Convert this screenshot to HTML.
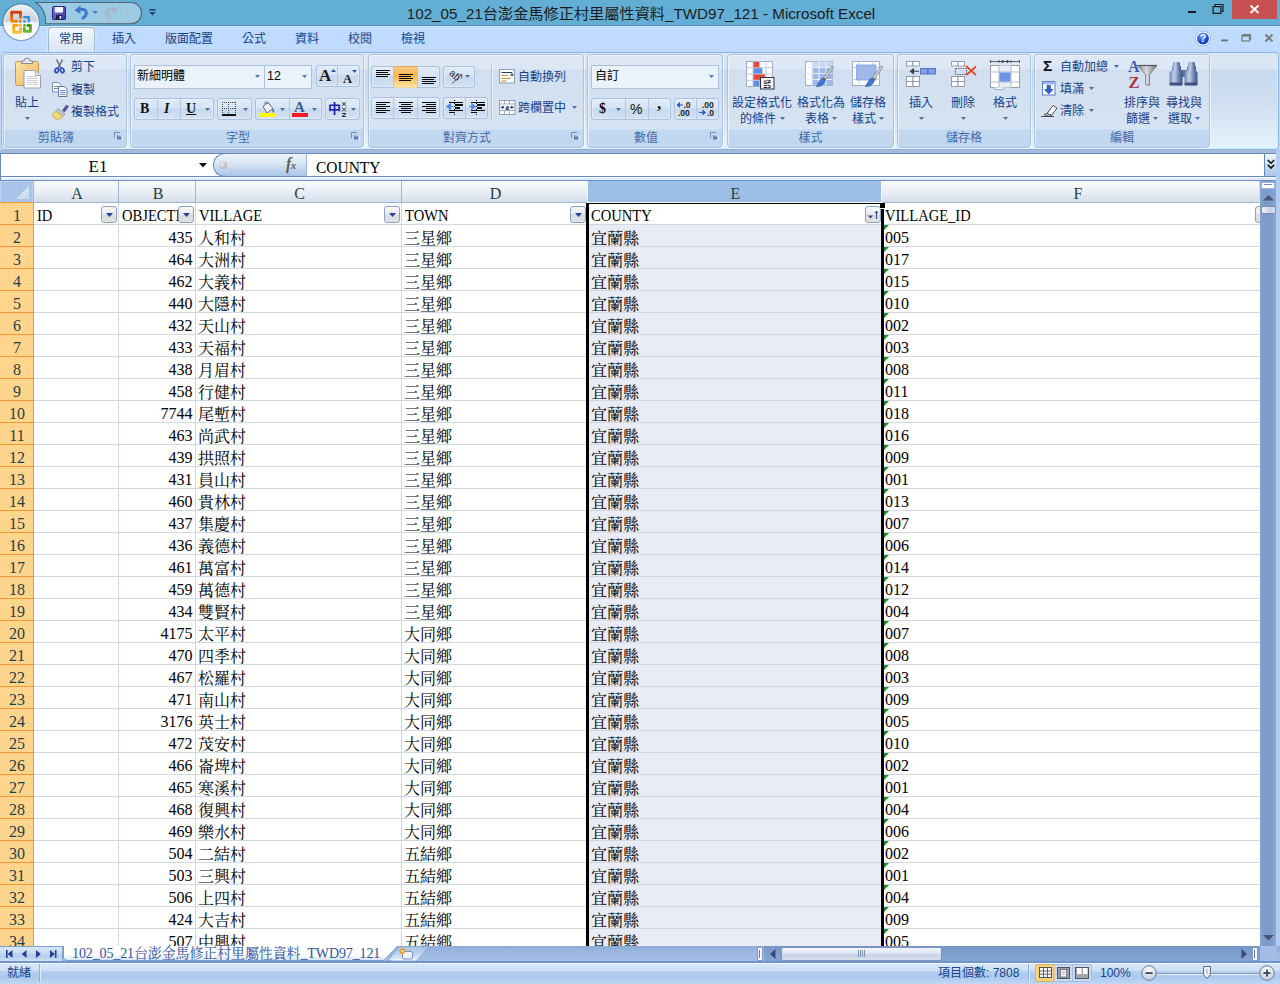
<!DOCTYPE html>
<html lang="zh-Hant"><head><meta charset="utf-8"><title>Microsoft Excel</title>
<style>
*{box-sizing:border-box;margin:0;padding:0}
html,body{width:1280px;height:984px;overflow:hidden}
body{position:relative;background:#bfdbff;font-family:"Liberation Sans","Noto Sans CJK TC",sans-serif;font-size:12px;color:#15428b}
.a{position:absolute}
.ui{font-family:"Liberation Sans","Noto Sans CJK TC",sans-serif}
.cell{font-family:"Liberation Serif","Noto Serif CJK SC",serif;font-size:16px;color:#000;white-space:nowrap;line-height:22px;height:22px;overflow:hidden}
.t{position:absolute;white-space:nowrap;line-height:14px;font-size:12px;color:#15428b}
svg{position:absolute;overflow:visible}
/* title */
#title{left:0;top:0;width:1280px;height:26px;background:#63aed5;border-bottom:1px solid #4f97ba}
#tabs{left:0;top:26px;width:1280px;height:27px;background:#bfdbff;border-top:1px solid #cbe2ff}
/* ribbon */
#ribbon{left:1px;top:52px;width:1278px;height:98px;border:1px solid #8db2e3;border-radius:4px;background:linear-gradient(#dbe6f4 0,#dae5f3 16px,#c8d9ee 17px,#cfdff1 50px,#e1f0fb 90px,#e6f5fd 97px);box-shadow:inset 0 -1px 0 #c4f0ff,inset -1px 0 0 #d4f0ff}
.grp{position:absolute;top:54px;height:94px;border:1px solid #a9c3e3;border-radius:4px;background:linear-gradient(#dfe9f6 0,#dce7f5 14px,#d1dff0 15px,#d6e3f3 74px,#c2d8f0 75px,#c1d7ef 93px);box-shadow:inset 1px 1px 0 rgba(255,255,255,.55),1px 1px 0 rgba(255,255,255,.55)}
.glab{position:absolute;left:0;right:0;top:76px;height:14px;line-height:14px;text-align:center;color:#3e6aaa;font-size:12px}
.launch{position:absolute;right:4px;top:77px;width:8px;height:8px}
</style></head><body>
<div id="title" class="a"></div>
<div id="tabs" class="a"></div>
<svg class="a" style="left:0;top:0" width="170" height="52" viewBox="0 0 170 52">
<defs>
<radialGradient id="ob" cx="50%" cy="35%" r="70%"><stop offset="0" stop-color="#ffffff"/><stop offset=".55" stop-color="#e9edf3"/><stop offset="1" stop-color="#b9c4d4"/></radialGradient>
<linearGradient id="ob2" x1="0" y1="0" x2="0" y2="1"><stop offset="0" stop-color="#eef1f6"/><stop offset=".5" stop-color="#c6cedb"/><stop offset="1" stop-color="#d8dee8"/></linearGradient>
<linearGradient id="ob3" x1="0" y1="0" x2="0" y2="1"><stop offset="0" stop-color="#e9edf4"/><stop offset=".5" stop-color="#fbfcfe"/><stop offset="1" stop-color="#ffffff"/></linearGradient>
<linearGradient id="lg1" x1="0" y1="0" x2="0" y2="1"><stop offset="0" stop-color="#d23f12"/><stop offset="1" stop-color="#f58a14"/></linearGradient>
<linearGradient id="lg3" x1="0" y1="0" x2="0" y2="1"><stop offset="0" stop-color="#f6a012"/><stop offset="1" stop-color="#fbc02a"/></linearGradient>
<linearGradient id="lg4" x1="0" y1="0" x2="0" y2="1"><stop offset="0" stop-color="#4c9a22"/><stop offset="1" stop-color="#6ab832"/></linearGradient>
<linearGradient id="sv" x1="0" y1="0" x2="1" y2="1"><stop offset="0" stop-color="#8a7be0"/><stop offset="1" stop-color="#3a2f9a"/></linearGradient>
</defs>
<path d="M36 2.5 H131 A10.6 10.6 0 0 1 131 23.7 H45.6 A23.5 23.5 0 0 0 36 2.5 Z" fill="#9ccae2" stroke="#4f6474" stroke-width="1.1"/>
<circle cx="21.200" cy="22.200" r="18.300" fill="none" stroke="#56708a" stroke-opacity=".55" stroke-width="1.200"/>
<circle cx="21.200" cy="22.200" r="17.500" fill="url(#ob2)"/>
<path d="M3.700 22.200 A17.500 17.500 0 0 0 38.700 22.200 Q21.200 19.500 3.700 22.200 Z" fill="url(#ob3)"/>
<circle cx="21.200" cy="22.200" r="17" fill="none" stroke="#ffffff" stroke-opacity=".7" stroke-width="1"/>
<!-- office logo -->
<g fill="none" stroke-linejoin="round" stroke-linecap="round">
<path d="M17 21.300 H11.600 V12.300 H20.500 V17.500" stroke="url(#lg1)" stroke-width="2.900"/>
<path d="M24.200 17.200 H28.800 V21.500" stroke="#2f8edb" stroke-width="2.300"/>
<path d="M17.300 25.400 H13.700 V32.300 H20.500 V28.800" stroke="url(#lg3)" stroke-width="2.900"/>
<path d="M24.300 28.800 V31.400 H30.400 V25.500 H27.800" stroke="url(#lg4)" stroke-width="2.900"/>
</g>
<circle cx="20.300" cy="21.500" r="1.350" fill="#e8641a"/><circle cx="24.500" cy="21.500" r="1.350" fill="#2f8edb"/>
<circle cx="20.300" cy="25.400" r="1.350" fill="#f7b21e"/><circle cx="24.500" cy="25.400" r="1.350" fill="#5aa52a"/>
<!-- save -->
<rect x="52.500" y="6.500" width="13" height="13" rx="1" fill="url(#sv)" stroke="#2b2384"/>
<rect x="55" y="7" width="8" height="5.500" fill="#f4f6ff"/>
<rect x="56" y="15" width="6" height="4.500" fill="#1d1b4a"/><rect x="59.500" y="16" width="1.800" height="2.800" fill="#e8e8f8"/>
<!-- undo -->
<path d="M82 18.800 C88 15 87.500 9.300 81.500 9.300 L79.500 9.300" fill="none" stroke="#3a78d0" stroke-width="3"/>
<path d="M74.500 10.200 L80.500 5.500 L80.500 14 Z" fill="#3a78d0"/>
<path d="M92.500 11 h5.500 l-2.750 3 z" fill="#4a76b8"/>
<!-- redo -->
<path d="M111 18.800 C105 15 105.500 9.300 111.500 9.300 L113.500 9.300" fill="none" stroke="#a6b8cb" stroke-width="3"/>
<path d="M118.500 10.200 L112.500 5.500 L112.500 14 Z" fill="#a6b8cb"/>
<path d="M124.500 11 h5.500 l-2.750 3 z" fill="#a9bccb"/>
<!-- customize -->
<rect x="149.500" y="9" width="6" height="1.600" fill="#1f3f7a"/>
<path d="M149.300 12 h6.400 l-3.200 3.600 z" fill="#1f3f7a"/>
</svg>
<div class="a" style="left:0;top:4px;width:1282px;text-align:center;font-size:15.200px;line-height:20px;color:#1c1c1c;white-space:nowrap">102_05_21台澎金馬修正村里屬性資料_TWD97_121 - Microsoft Excel</div>
<svg class="a" style="left:1180px;top:0" width="100" height="26" viewBox="0 0 100 26">
<rect x="52" y="0" width="45" height="19" fill="#c75050"/>
<path d="M70.500 5.500 l8 7.500 M78.500 5.500 l-8 7.500" stroke="#fff" stroke-width="1.900" fill="none"/>
<rect x="8" y="11" width="8" height="2" fill="#1a1a1a"/>
<path d="M35 6 v-1.500 h8 v7 h-1.500" fill="none" stroke="#1a1a1a" stroke-width="1.200"/>
<rect x="33.100" y="6.600" width="7.800" height="6.800" fill="none" stroke="#1a1a1a" stroke-width="1.200"/>
</svg>
<div class="a" style="left:48px;top:27px;width:47px;height:26px;border:1px solid #9bbbe3;border-bottom:none;border-radius:4px 4px 0 0;background:linear-gradient(#f3f8fe,#e2ecf8 60%,#dbe6f4);box-shadow:0 0 3px rgba(255,255,255,.9)"></div>
<div class="t" style="left:49px;top:32px;width:44px;text-align:center">常用</div>
<div class="t" style="left:102px;top:32px;width:44px;text-align:center">插入</div>
<div class="t" style="left:155px;top:32px;width:68px;text-align:center">版面配置</div>
<div class="t" style="left:232px;top:32px;width:44px;text-align:center">公式</div>
<div class="t" style="left:285px;top:32px;width:44px;text-align:center">資料</div>
<div class="t" style="left:338px;top:32px;width:44px;text-align:center">校閱</div>
<div class="t" style="left:391px;top:32px;width:44px;text-align:center">檢視</div>
<svg class="a" style="left:1190px;top:26px" width="90" height="26" viewBox="0 0 90 26">
<defs><radialGradient id="hp" cx="40%" cy="30%" r="75%"><stop offset="0" stop-color="#6fa0ff"/><stop offset=".6" stop-color="#1f4fd0"/><stop offset="1" stop-color="#0a2a9a"/></radialGradient></defs>
<circle cx="13" cy="12.500" r="6.600" fill="url(#hp)" stroke="#ffffff" stroke-width="1.300"/>
<circle cx="13" cy="12.500" r="7.500" fill="none" stroke="#7f9fd0" stroke-width=".6"/>
<text x="13" y="16.300" font-family="Liberation Sans,sans-serif" font-size="10.500" font-weight="bold" fill="#fff" text-anchor="middle">?</text>
<rect x="31" y="13.500" width="7" height="1.800" fill="#6f6f6f"/>
<path d="M53 10 v-1.500 h7.500 v5 h-1.500" fill="none" stroke="#7a7a7a" stroke-width="1.100"/>
<rect x="52" y="9.500" width="7.500" height="5.500" fill="none" stroke="#7a7a7a" stroke-width="1.200"/>
<rect x="52" y="9.200" width="7.500" height="1.300" fill="#7a7a7a"/>
<path d="M75.500 8.500 l7 7 M82.500 8.500 l-7 7" stroke="#7a7a7a" stroke-width="1.900" fill="none"/>
</svg>
<div id="ribbon" class="a"></div>
<div class="grp" style="left:3px;width:124px"><div class="glab" style="right:18px">剪貼簿</div><svg class="launch" viewBox="0 0 8 8" width="8" height="8"><path d="M.5 6 V.5 H6" fill="none" stroke="#6e8fc0" stroke-width="1"/><rect x="3" y="3" width="4.500" height="4.500" fill="#5f80b5"/><path d="M3 3 h4.500 v4.500" fill="none" stroke="#fff" stroke-width=".8" transform="translate(.8 .8)"/></svg></div>
<div class="grp" style="left:130px;width:234px"><div class="glab" style="right:18px">字型</div><svg class="launch" viewBox="0 0 8 8" width="8" height="8"><path d="M.5 6 V.5 H6" fill="none" stroke="#6e8fc0" stroke-width="1"/><rect x="3" y="3" width="4.500" height="4.500" fill="#5f80b5"/><path d="M3 3 h4.500 v4.500" fill="none" stroke="#fff" stroke-width=".8" transform="translate(.8 .8)"/></svg></div>
<div class="grp" style="left:368px;width:216px"><div class="glab" style="right:18px">對齊方式</div><svg class="launch" viewBox="0 0 8 8" width="8" height="8"><path d="M.5 6 V.5 H6" fill="none" stroke="#6e8fc0" stroke-width="1"/><rect x="3" y="3" width="4.500" height="4.500" fill="#5f80b5"/><path d="M3 3 h4.500 v4.500" fill="none" stroke="#fff" stroke-width=".8" transform="translate(.8 .8)"/></svg></div>
<div class="grp" style="left:587px;width:136px"><div class="glab" style="right:18px">數值</div><svg class="launch" viewBox="0 0 8 8" width="8" height="8"><path d="M.5 6 V.5 H6" fill="none" stroke="#6e8fc0" stroke-width="1"/><rect x="3" y="3" width="4.500" height="4.500" fill="#5f80b5"/><path d="M3 3 h4.500 v4.500" fill="none" stroke="#fff" stroke-width=".8" transform="translate(.8 .8)"/></svg></div>
<div class="grp" style="left:727px;width:167px"><div class="glab" style="right:0px">樣式</div></div>
<div class="grp" style="left:897px;width:134px"><div class="glab" style="right:0px">儲存格</div></div>
<div class="grp" style="left:1034px;width:176px"><div class="glab" style="right:0px">編輯</div></div>
<svg class="a" style="left:14px;top:58px" width="30" height="34" viewBox="0 0 30 34">
<defs><linearGradient id="cb" x1="0" y1="0" x2="1" y2="1"><stop offset="0" stop-color="#fbe3a6"/><stop offset="1" stop-color="#eab65c"/></linearGradient></defs>
<rect x="1.500" y="3.500" width="23" height="24" rx="2" fill="url(#cb)" stroke="#c39845"/>
<path d="M7.500 5.500 h11 v-2.500 h-2.500 a3 3 0 0 0 -6 0 h-2.500 z" fill="#e4e6ea" stroke="#7a8088" stroke-width=".9"/>
<path d="M10 12.500 h11.500 l5 5 v12.500 h-16.500 z" fill="#fdfdfe" stroke="#9099a8" stroke-width=".9"/>
<path d="M21.500 12.500 v5 h5" fill="#e4e8ee" stroke="#9099a8" stroke-width=".8"/>
<path d="M12.500 18.500 h10 M12.500 20.500 h11.500 M12.500 22.500 h11.500 M12.500 24.500 h11.500 M12.500 26.500 h11.500" stroke="#c4cad6" stroke-width=".9"/>
</svg>
<div class="t" style="left:-33px;top:96px;width:120px;text-align:center;">貼上</div>
<svg class="a" style="left:24.5px;top:117px" width="5" height="3" viewBox="0 0 5 3"><path d="M0 0 h5 l-2.5 3 z" fill="#4d6f9f"/></svg>
<svg class="a" style="left:54px;top:59px" width="11" height="15" viewBox="0 0 11 15">
<path d="M2.500 .5 L6.800 9 M8.500 .5 L4.200 9" stroke="#6a7482" stroke-width="1.600" fill="none"/>
<ellipse cx="2.800" cy="11.300" rx="1.700" ry="2.300" fill="none" stroke="#2a4fbf" stroke-width="1.700" transform="rotate(25 2.800 11.300)"/>
<ellipse cx="8.200" cy="11.300" rx="1.700" ry="2.300" fill="none" stroke="#2a4fbf" stroke-width="1.700" transform="rotate(-25 8.200 11.300)"/>
</svg>
<div class="t" style="left:71px;top:60px;">剪下</div>
<svg class="a" style="left:52px;top:82px" width="16" height="15" viewBox="0 0 16 15">
<path d="M.5 .5 h6 l2.500 2.500 v7 h-8.500 z" fill="#fff" stroke="#6d86b4" stroke-width=".9"/>
<path d="M2 4.500 h5 M2 6.500 h5" stroke="#5a7fc0" stroke-width=".9"/>
<path d="M6.500 4.500 h6 l2.500 2.500 v7.500 h-8.500 z" fill="#fff" stroke="#52699b" stroke-width=".9"/>
<path d="M8 8.500 h5.500 M8 10.500 h5.500 M8 12.500 h5.500" stroke="#5a7fc0" stroke-width=".9"/>
</svg>
<div class="t" style="left:71px;top:83px;">複製</div>
<svg class="a" style="left:52px;top:104px" width="17" height="16" viewBox="0 0 17 16">
<path d="M10.500 6.500 L14.500 1 L16.500 2.500 L12.500 8 z" fill="#5a55b0" stroke="#3a3780" stroke-width=".6"/>
<path d="M6 4.500 L13 10 L11 12.500 L4 7 z" fill="#c3c7d0" stroke="#7a8290" stroke-width=".6"/>
<path d="M4 7 L11 12.500 L6.500 15.500 C3.500 16 0 12.500 .5 10 z" fill="#f2d87c" stroke="#c2a040" stroke-width=".7"/>
</svg>
<div class="t" style="left:71px;top:105px;">複製格式</div>
<div class="a" style="left:134px;top:65px;width:131px;height:24px;background:#eaf2fb;border:1px solid #abc1de;"></div>
<div class="a" style="left:137px;top:69px;font-size:12px;line-height:14px;color:#000;white-space:nowrap">新細明體</div>
<svg class="a" style="left:255px;top:75px" width="5" height="3" viewBox="0 0 5 3"><path d="M0 0 h5 l-2.5 3 z" fill="#5179b5"/></svg>
<div class="a" style="left:264px;top:65px;width:48px;height:24px;background:#eaf2fb;border:1px solid #abc1de;"></div>
<div class="a" style="left:267px;top:69px;font-size:12.500px;line-height:14px;color:#000;white-space:nowrap">12</div>
<svg class="a" style="left:302px;top:75px" width="5" height="3" viewBox="0 0 5 3"><path d="M0 0 h5 l-2.5 3 z" fill="#5179b5"/></svg>
<div class="a" style="left:316px;top:65px;width:44px;height:22px;background:linear-gradient(#e1ebf8 0,#d6e4f5 45%,#c7d9ef 50%,#d3e2f4 100%);border:1px solid #a9c0df;border-radius:3px;box-shadow:inset 0 0 0 1px rgba(255,255,255,.35);"></div>
<div class="a" style="left:337px;top:66px;width:1px;height:20px;background:#b3c8e4"></div>
<div class="a" style="left:319px;top:66px;font:bold 17px/20px 'Liberation Serif',serif;color:#1a1a1a">A</div>
<div class="a" style="left:343px;top:70px;font:bold 12.500px/18px 'Liberation Serif',serif;color:#1a1a1a">A</div>
<svg class="a" style="left:331px;top:69px" width="5" height="3" viewBox="0 0 5 3"><path d="M0 3 h5 l-2.500 -3 z" fill="#2f55a8"/></svg>
<svg class="a" style="left:352px;top:70px" width="5" height="3" viewBox="0 0 5 3"><path d="M0 0 h5 l-2.500 3 z" fill="#2f55a8"/></svg>
<div class="a" style="left:134px;top:98px;width:80px;height:22px;background:linear-gradient(#e1ebf8 0,#d6e4f5 45%,#c7d9ef 50%,#d3e2f4 100%);border:1px solid #a9c0df;border-radius:3px;box-shadow:inset 0 0 0 1px rgba(255,255,255,.35);"></div>
<div class="a" style="left:157px;top:99px;width:1px;height:20px;background:#b3c8e4"></div>
<div class="a" style="left:180px;top:99px;width:1px;height:20px;background:#b3c8e4"></div>
<div class="a" style="left:140px;top:99px;font:bold 14px/20px 'Liberation Serif',serif;color:#111">B</div>
<div class="a" style="left:164px;top:99px;font:italic bold 14px/20px 'Liberation Serif',serif;color:#111">I</div>
<div class="a" style="left:186px;top:99px;font:bold 14px/20px 'Liberation Serif',serif;color:#111;text-decoration:underline">U</div>
<svg class="a" style="left:204.5px;top:107.5px" width="5" height="3" viewBox="0 0 5 3"><path d="M0 0 h5 l-2.5 3 z" fill="#4d6f9f"/></svg>
<div class="a" style="left:217px;top:98px;width:35px;height:22px;background:linear-gradient(#e1ebf8 0,#d6e4f5 45%,#c7d9ef 50%,#d3e2f4 100%);border:1px solid #a9c0df;border-radius:3px;box-shadow:inset 0 0 0 1px rgba(255,255,255,.35);"></div>
<svg class="a" style="left:222px;top:102px" width="14" height="14" viewBox="0 0 14 14"><g shape-rendering="crispEdges" fill="#4a4a4a"><rect x="0" y="0" width="1" height="1"/><rect x="2" y="0" width="1" height="1"/><rect x="4" y="0" width="1" height="1"/><rect x="6" y="0" width="1" height="1"/><rect x="8" y="0" width="1" height="1"/><rect x="10" y="0" width="1" height="1"/><rect x="12" y="0" width="1" height="1"/><rect x="0" y="6" width="1" height="1"/><rect x="2" y="6" width="1" height="1"/><rect x="4" y="6" width="1" height="1"/><rect x="6" y="6" width="1" height="1"/><rect x="8" y="6" width="1" height="1"/><rect x="10" y="6" width="1" height="1"/><rect x="12" y="6" width="1" height="1"/><rect x="0" y="0" width="1" height="1"/><rect x="0" y="2" width="1" height="1"/><rect x="0" y="4" width="1" height="1"/><rect x="0" y="6" width="1" height="1"/><rect x="0" y="8" width="1" height="1"/><rect x="0" y="10" width="1" height="1"/><rect x="6" y="0" width="1" height="1"/><rect x="6" y="2" width="1" height="1"/><rect x="6" y="4" width="1" height="1"/><rect x="6" y="6" width="1" height="1"/><rect x="6" y="8" width="1" height="1"/><rect x="6" y="10" width="1" height="1"/><rect x="13" y="0" width="1" height="1"/><rect x="13" y="2" width="1" height="1"/><rect x="13" y="4" width="1" height="1"/><rect x="13" y="6" width="1" height="1"/><rect x="13" y="8" width="1" height="1"/><rect x="13" y="10" width="1" height="1"/></g><rect x="0" y="12" width="14" height="2" fill="#111" shape-rendering="crispEdges"/></svg>
<svg class="a" style="left:242.5px;top:107.5px" width="5" height="3" viewBox="0 0 5 3"><path d="M0 0 h5 l-2.5 3 z" fill="#4d6f9f"/></svg>
<div class="a" style="left:255px;top:98px;width:67px;height:22px;background:linear-gradient(#e1ebf8 0,#d6e4f5 45%,#c7d9ef 50%,#d3e2f4 100%);border:1px solid #a9c0df;border-radius:3px;box-shadow:inset 0 0 0 1px rgba(255,255,255,.35);"></div>
<div class="a" style="left:289px;top:99px;width:1px;height:20px;background:#b3c8e4"></div>
<svg class="a" style="left:259px;top:101px" width="16" height="17" viewBox="0 0 16 17">
<path d="M4 5.500 L9 1.500 L14 7.500 L8 12 z" fill="#f4f6fa" stroke="#5d6a7d" stroke-width="1"/>
<path d="M6 3.500 C5 0 9 0 8.500 3" fill="none" stroke="#5d6a7d" stroke-width=".9"/>
<path d="M13.500 7.500 C15.500 9 15.500 11 14.500 12 C13.500 11 13 9 13.500 7.500 z" fill="#2b64c8"/>
<rect x="0" y="12" width="16" height="4" fill="#ffff00"/>
</svg>
<svg class="a" style="left:279.5px;top:107.5px" width="5" height="3" viewBox="0 0 5 3"><path d="M0 0 h5 l-2.5 3 z" fill="#4d6f9f"/></svg>
<div class="a" style="left:294px;top:98px;font:bold 15px/18px 'Liberation Serif',serif;color:#3a5f9f">A</div>
<div class="a" style="left:292px;top:113px;width:16px;height:4px;background:#ee1c24"></div>
<svg class="a" style="left:312px;top:107.5px" width="5" height="3" viewBox="0 0 5 3"><path d="M0 0 h5 l-2.5 3 z" fill="#4d6f9f"/></svg>
<div class="a" style="left:325px;top:98px;width:35px;height:22px;background:linear-gradient(#e1ebf8 0,#d6e4f5 45%,#c7d9ef 50%,#d3e2f4 100%);border:1px solid #a9c0df;border-radius:3px;box-shadow:inset 0 0 0 1px rgba(255,255,255,.35);"></div>
<div class="a" style="left:328px;top:101px;font-size:13px;line-height:15px;color:#1c1cb0;font-weight:bold">中</div>
<svg class="a" style="left:341px;top:101px" width="6" height="16" viewBox="0 0 6 16"><path d="M1 1 l4 4 M5 1 l-4 4 M1 6.500 l4 4 M5 6.500 l-4 4 M1 12.500 h4 l-4 3 h4" fill="none" stroke="#222" stroke-width=".9"/></svg>
<svg class="a" style="left:350.5px;top:107.5px" width="5" height="3" viewBox="0 0 5 3"><path d="M0 0 h5 l-2.5 3 z" fill="#4d6f9f"/></svg>
<div class="a" style="left:371px;top:66px;width:69px;height:22px;background:linear-gradient(#e1ebf8 0,#d6e4f5 45%,#c7d9ef 50%,#d3e2f4 100%);border:1px solid #a9c0df;border-radius:3px;box-shadow:inset 0 0 0 1px rgba(255,255,255,.35);"></div>
<div class="a" style="left:394px;top:66px;width:23px;height:22px;background:linear-gradient(#f5c98c 0,#fbb550 40%,#fcbc58 55%,#fee7a0 100%);border-top:1px solid #e3a95b;border-bottom:1px solid #f3d9a0"></div>
<div class="a" style="left:393px;top:67px;width:1px;height:20px;background:#b3c8e4"></div>
<div class="a" style="left:417px;top:67px;width:1px;height:20px;background:#b3c8e4"></div>
<svg class="a" shape-rendering="crispEdges" style="left:376px;top:70px" width="14" height="8" viewBox="0 0 14 8"><rect x="0" y="0" width="14" height="1" fill="#0a0a0a"/><rect x="0" y="2" width="12" height="1" fill="#0a0a0a"/><rect x="0" y="4" width="14" height="1" fill="#0a0a0a"/><rect x="0" y="6" width="12" height="1" fill="#0a0a0a"/></svg>
<svg class="a" shape-rendering="crispEdges" style="left:399px;top:74px" width="14" height="8" viewBox="0 0 14 8"><rect x="0" y="0" width="14" height="1" fill="#0a0a0a"/><rect x="0" y="2" width="12" height="1" fill="#0a0a0a"/><rect x="0" y="4" width="14" height="1" fill="#0a0a0a"/><rect x="0" y="6" width="12" height="1" fill="#0a0a0a"/></svg>
<svg class="a" shape-rendering="crispEdges" style="left:422px;top:77px" width="14" height="8" viewBox="0 0 14 8"><rect x="0" y="0" width="14" height="1" fill="#0a0a0a"/><rect x="0" y="2" width="12" height="1" fill="#0a0a0a"/><rect x="0" y="4" width="14" height="1" fill="#0a0a0a"/><rect x="0" y="6" width="12" height="1" fill="#0a0a0a"/></svg>
<div class="a" style="left:443px;top:66px;width:32px;height:22px;background:linear-gradient(#e1ebf8 0,#d6e4f5 45%,#c7d9ef 50%,#d3e2f4 100%);border:1px solid #a9c0df;border-radius:3px;box-shadow:inset 0 0 0 1px rgba(255,255,255,.35);"></div>
<svg class="a" style="left:446px;top:68px" width="18" height="18" viewBox="0 0 18 18"><text x="0" y="0" font-family="Liberation Sans,sans-serif" font-size="10" fill="#2a2a2a" transform="translate(2.500 6) rotate(42)">ab</text><path d="M6 15.500 L16 6.500 M16 6.500 l-3.800 .5 M16 6.500 l-.5 3.800" stroke="#6a4a48" stroke-width="1" fill="none"/></svg>
<svg class="a" style="left:465px;top:75px" width="5" height="3" viewBox="0 0 5 3"><path d="M0 0 h5 l-2.5 3 z" fill="#4d6f9f"/></svg>
<div class="a" style="left:371px;top:97px;width:69px;height:22px;background:linear-gradient(#e1ebf8 0,#d6e4f5 45%,#c7d9ef 50%,#d3e2f4 100%);border:1px solid #a9c0df;border-radius:3px;box-shadow:inset 0 0 0 1px rgba(255,255,255,.35);"></div>
<div class="a" style="left:393px;top:98px;width:1px;height:20px;background:#b3c8e4"></div>
<div class="a" style="left:417px;top:98px;width:1px;height:20px;background:#b3c8e4"></div>
<svg class="a" shape-rendering="crispEdges" style="left:376px;top:102px" width="14" height="12" viewBox="0 0 14 12"><rect x="0" y="0" width="14" height="1" fill="#0a0a0a"/><rect x="0" y="2" width="10" height="1" fill="#0a0a0a"/><rect x="0" y="4" width="14" height="1" fill="#0a0a0a"/><rect x="0" y="6" width="10" height="1" fill="#0a0a0a"/><rect x="0" y="8" width="14" height="1" fill="#0a0a0a"/><rect x="0" y="10" width="10" height="1" fill="#0a0a0a"/></svg>
<svg class="a" shape-rendering="crispEdges" style="left:399px;top:102px" width="14" height="12" viewBox="0 0 14 12"><rect x="0" y="0" width="14" height="1" fill="#0a0a0a"/><rect x="2" y="2" width="10" height="1" fill="#0a0a0a"/><rect x="0" y="4" width="14" height="1" fill="#0a0a0a"/><rect x="2" y="6" width="10" height="1" fill="#0a0a0a"/><rect x="0" y="8" width="14" height="1" fill="#0a0a0a"/><rect x="2" y="10" width="10" height="1" fill="#0a0a0a"/></svg>
<svg class="a" shape-rendering="crispEdges" style="left:422px;top:102px" width="14" height="12" viewBox="0 0 14 12"><rect x="0" y="0" width="14" height="1" fill="#0a0a0a"/><rect x="4" y="2" width="10" height="1" fill="#0a0a0a"/><rect x="0" y="4" width="14" height="1" fill="#0a0a0a"/><rect x="4" y="6" width="10" height="1" fill="#0a0a0a"/><rect x="0" y="8" width="14" height="1" fill="#0a0a0a"/><rect x="4" y="10" width="10" height="1" fill="#0a0a0a"/></svg>
<div class="a" style="left:443px;top:97px;width:45px;height:22px;background:linear-gradient(#e1ebf8 0,#d6e4f5 45%,#c7d9ef 50%,#d3e2f4 100%);border:1px solid #a9c0df;border-radius:3px;box-shadow:inset 0 0 0 1px rgba(255,255,255,.35);"></div>
<div class="a" style="left:465px;top:98px;width:1px;height:20px;background:#b3c8e4"></div>
<svg class="a" style="left:447px;top:100px" width="17" height="15" viewBox="0 0 17 15"><g shape-rendering="crispEdges" fill="#0a0a0a"><rect x="2" y="2" width="14" height="1"/><rect x="8" y="4" width="8" height="2"/><rect x="8" y="7" width="5" height="2"/><rect x="2" y="10" width="14" height="1"/><rect x="2" y="12" width="6" height="1"/><rect x="7" y="0" width="1" height="1"/><rect x="7" y="3" width="1" height="1"/><rect x="7" y="6" width="1" height="1"/><rect x="7" y="9" width="1" height="1"/><rect x="7" y="12" width="1" height="1"/><rect x="7" y="14" width="1" height="1"/></g><path d="M6 6.500 h-3.500 M0 6.500 l3.200 -2.600 v5.200 z" fill="#4a86e8" stroke="#4a86e8" stroke-width="1.200"/></svg>
<svg class="a" style="left:469px;top:100px" width="17" height="15" viewBox="0 0 17 15"><g shape-rendering="crispEdges" fill="#0a0a0a"><rect x="2" y="2" width="14" height="1"/><rect x="8" y="4" width="8" height="2"/><rect x="8" y="7" width="5" height="2"/><rect x="2" y="10" width="14" height="1"/><rect x="2" y="12" width="6" height="1"/><rect x="7" y="0" width="1" height="1"/><rect x="7" y="3" width="1" height="1"/><rect x="7" y="6" width="1" height="1"/><rect x="7" y="9" width="1" height="1"/><rect x="7" y="12" width="1" height="1"/><rect x="7" y="14" width="1" height="1"/></g><path d="M0 6.500 h3 M6 6.500 l-3.200 -2.600 v5.200 z" fill="#4a86e8" stroke="#4a86e8" stroke-width="1.200"/></svg>
<div class="a" style="left:491px;top:64px;width:1px;height:56px;background:#a9c0df"></div>
<div class="a" style="left:492px;top:64px;width:1px;height:56px;background:rgba(255,255,255,.6)"></div>
<svg class="a" style="left:499px;top:69px" width="17" height="15" viewBox="0 0 17 15"><rect x=".5" y=".5" width="15" height="13.500" fill="#fdfdfe" stroke="#8a98ad" stroke-width=".9"/><path d="M2.500 3.500 h9 M2.500 6.500 h6 M2.500 9.500 h9 M2.500 12 h5" stroke="#c98a2a" stroke-width="1.100"/><path d="M2.500 3.500 h10.500 v3.500 M13 7 l-1.700 -1.500 M13 7 l1.700 -1.500" stroke="#2a3f6e" stroke-width="1" fill="none"/></svg>
<div class="t" style="left:518px;top:70px;">自動換列</div>
<svg class="a" style="left:499px;top:100px" width="17" height="15" viewBox="0 0 17 15"><rect x=".5" y=".5" width="15.500" height="14" fill="#fdfdfe" stroke="#8a98ad" stroke-width=".9"/><path d="M.5 4 h15.500 M.5 10.500 h15.500 M5.500 .5 v3.500 M10.500 .5 v3.500 M5.500 10.500 v4 M10.500 10.500 v4" stroke="#8a98ad" stroke-width=".8"/><text x="8.200" y="9.600" font-family="Liberation Serif,serif" font-size="7.500" font-weight="bold" fill="#222" text-anchor="middle">a</text><path d="M1.500 7.300 h3.500 M5 7.300 l-1.600 -1.300 v2.600 z M15 7.300 h-3.500 M11.500 7.300 l1.600 -1.300 v2.600 z" stroke="#2a3f6e" stroke-width=".8" fill="#2a3f6e"/></svg>
<div class="t" style="left:518px;top:101px;">跨欄置中</div>
<svg class="a" style="left:571.5px;top:106px" width="5" height="3" viewBox="0 0 5 3"><path d="M0 0 h5 l-2.5 3 z" fill="#4d6f9f"/></svg>
<div class="a" style="left:591px;top:65px;width:128px;height:24px;background:#eaf2fb;border:1px solid #abc1de;"></div>
<div class="a" style="left:595px;top:69px;font-size:12px;line-height:14px;color:#000;white-space:nowrap">自訂</div>
<svg class="a" style="left:709px;top:75px" width="5" height="3" viewBox="0 0 5 3"><path d="M0 0 h5 l-2.5 3 z" fill="#5179b5"/></svg>
<div class="a" style="left:591px;top:98px;width:80px;height:22px;background:linear-gradient(#e1ebf8 0,#d6e4f5 45%,#c7d9ef 50%,#d3e2f4 100%);border:1px solid #a9c0df;border-radius:3px;box-shadow:inset 0 0 0 1px rgba(255,255,255,.35);"></div>
<div class="a" style="left:625px;top:99px;width:1px;height:20px;background:#b3c8e4"></div>
<div class="a" style="left:648px;top:99px;width:1px;height:20px;background:#b3c8e4"></div>
<div class="a" style="left:599px;top:99px;font:bold 14px/20px 'Liberation Serif',serif;color:#111">$</div>
<svg class="a" style="left:615.5px;top:107.5px" width="5" height="3" viewBox="0 0 5 3"><path d="M0 0 h5 l-2.5 3 z" fill="#4d6f9f"/></svg>
<div class="a" style="left:630px;top:99px;font:normal 14px/20px 'Liberation Sans',sans-serif;color:#111">%</div>
<div class="a" style="left:657px;top:94px;font:bold 17px/20px 'Liberation Serif',serif;color:#111">,</div>
<div class="a" style="left:674px;top:98px;width:45px;height:22px;background:linear-gradient(#e1ebf8 0,#d6e4f5 45%,#c7d9ef 50%,#d3e2f4 100%);border:1px solid #a9c0df;border-radius:3px;box-shadow:inset 0 0 0 1px rgba(255,255,255,.35);"></div>
<div class="a" style="left:696px;top:99px;width:1px;height:20px;background:#b3c8e4"></div>
<svg class="a" style="left:677px;top:101px" width="18" height="16" viewBox="0 0 18 16"><text x="6.500" y="7" font-family="Liberation Sans,sans-serif" font-size="8.500" font-weight="bold" fill="#222">.0</text><text x="1" y="14.500" font-family="Liberation Sans,sans-serif" font-size="8.500" font-weight="bold" fill="#222">.00</text><path d="M6 4 h-5 M0 4 l2.600 -2.200 v4.400 z" stroke="#2b5fc8" stroke-width="1" fill="#2b5fc8"/></svg>
<svg class="a" style="left:699px;top:101px" width="18" height="16" viewBox="0 0 18 16"><text x="3" y="7" font-family="Liberation Sans,sans-serif" font-size="8.500" font-weight="bold" fill="#222">.00</text><text x="8" y="14.500" font-family="Liberation Sans,sans-serif" font-size="8.500" font-weight="bold" fill="#222">.0</text><path d="M0 11.500 h5 M6.500 11.500 l-2.600 -2.200 v4.400 z" stroke="#2b5fc8" stroke-width="1" fill="#2b5fc8"/></svg>
<svg class="a" style="left:746px;top:61px" width="32" height="32" viewBox="0 0 32 32">
<rect x=".5" y=".5" width="26" height="25" fill="#fff" stroke="#9aa7bd" stroke-width=".9"/>
<path d="M.5 6.700 h26 M.5 13 h26 M.5 19.300 h26 M7 .5 v25 M13.500 .5 v25 M20 .5 v25" stroke="#b9c4d8" stroke-width=".9"/>
<rect x="7.400" y="1" width="5.700" height="5.400" fill="#e5483d"/><rect x="7.400" y="7.200" width="9" height="5.400" fill="#5f8de0"/>
<rect x="7.400" y="13.400" width="11.500" height="5.400" fill="#e5483d"/><rect x="7.400" y="19.700" width="5.700" height="5.400" fill="#5f8de0"/>
<rect x="14.500" y="16.500" width="13.500" height="11.500" fill="#f4f4f4" stroke="#333" stroke-width="1"/>
<text x="21.300" y="22.500" font-family="Liberation Sans,sans-serif" font-size="6.500" font-weight="bold" fill="#111" text-anchor="middle">≤≠</text><text x="21.300" y="27.500" font-family="Liberation Sans,sans-serif" font-size="6.500" font-weight="bold" fill="#111" text-anchor="middle">=&gt;</text>
</svg>
<div class="t" style="left:702px;top:96px;width:120px;text-align:center;">設定格式化</div>
<div class="t" style="left:698px;top:112px;width:120px;text-align:center;">的條件</div>
<svg class="a" style="left:779.5px;top:117px" width="5" height="3" viewBox="0 0 5 3"><path d="M0 0 h5 l-2.5 3 z" fill="#4d6f9f"/></svg>
<svg class="a" style="left:805px;top:61px" width="32" height="32" viewBox="0 0 32 32">
<rect x=".5" y=".5" width="27" height="24" fill="#fff" stroke="#9aa7bd" stroke-width=".9"/>
<rect x="7" y="6.500" width="20.500" height="18" fill="#9fb8ea"/>
<rect x="7" y=".5" width="20.500" height="6" fill="#c9d6f0"/>
<path d="M.5 6.500 h27 M.5 12.500 h27 M.5 18.500 h27 M7 .5 v24 M14 .5 v24 M21 .5 v24" stroke="#e8eefa" stroke-width="1.100"/>
<path d="M29 6 L20.500 18.500 L18 17 L27 5 z" fill="#c9ccd3" stroke="#777e8c" stroke-width=".7"/>
<path d="M20.500 18.500 L18 17 C15 18 14 21 11.500 25.500 C16 26 19.500 23 20.500 18.500 z" fill="#3f78d0" stroke="#2a519a" stroke-width=".6"/>
<path d="M18.500 17.300 l1.800 1.100" stroke="#8a5a2a" stroke-width="1.600"/>
</svg>
<div class="t" style="left:761px;top:96px;width:120px;text-align:center;">格式化為</div>
<div class="t" style="left:757px;top:112px;width:120px;text-align:center;">表格</div>
<svg class="a" style="left:831.5px;top:117px" width="5" height="3" viewBox="0 0 5 3"><path d="M0 0 h5 l-2.5 3 z" fill="#4d6f9f"/></svg>
<svg class="a" style="left:852px;top:61px" width="34" height="32" viewBox="0 0 34 32">
<rect x=".5" y=".5" width="27" height="24" fill="#fff" stroke="#9aa7bd" stroke-width=".9"/>
<path d="M.5 6.500 h27 M.5 18.500 h27 M7 .5 v24 M21 .5 v24" stroke="#c3cde0" stroke-width=".9"/>
<rect x="4.500" y="4" width="19.500" height="15" fill="#9fb8ea" stroke="#7f9fe0" stroke-width=".8"/>
<path d="M31 6 L22.500 18.500 L20 17 L29 5 z" fill="#c9ccd3" stroke="#777e8c" stroke-width=".7"/>
<path d="M22.500 18.500 L20 17 C17 18 16 21 13.500 25.500 C18 26 21.500 23 22.500 18.500 z" fill="#3f78d0" stroke="#2a519a" stroke-width=".6"/>
<path d="M20.500 17.300 l1.800 1.100" stroke="#8a5a2a" stroke-width="1.600"/>
</svg>
<div class="t" style="left:808px;top:96px;width:120px;text-align:center;">儲存格</div>
<div class="t" style="left:804px;top:112px;width:120px;text-align:center;">樣式</div>
<svg class="a" style="left:878.5px;top:117px" width="5" height="3" viewBox="0 0 5 3"><path d="M0 0 h5 l-2.5 3 z" fill="#4d6f9f"/></svg>
<svg class="a" style="left:906px;top:61px" width="32" height="28" viewBox="0 0 32 28">
<g fill="#fff" stroke="#8d96a5" stroke-width=".9"><rect x=".5" y=".5" width="6.500" height="4.500"/><rect x="7" y=".5" width="6.500" height="4.500"/>
<rect x=".5" y="15.500" width="6.500" height="5"/><rect x="7" y="15.500" width="6.500" height="5"/><rect x=".5" y="20.500" width="6.500" height="5"/><rect x="7" y="20.500" width="6.500" height="5"/></g>
<rect x="14.500" y="7.500" width="7.500" height="5.500" fill="#7fa0e8" stroke="#4a6fc0" stroke-width=".9"/><rect x="22" y="7.500" width="7.500" height="5.500" fill="#7fa0e8" stroke="#4a6fc0" stroke-width=".9"/>
<path d="M13 10.300 h-7 M4.500 10.300 l3 -2.400 v4.800 z" stroke="#3a3f48" stroke-width="1.100" fill="#3a3f48"/>
</svg>
<div class="t" style="left:861px;top:96px;width:120px;text-align:center;">插入</div>
<svg class="a" style="left:918.5px;top:117px" width="5" height="3" viewBox="0 0 5 3"><path d="M0 0 h5 l-2.5 3 z" fill="#4d6f9f"/></svg>
<svg class="a" style="left:951px;top:61px" width="30" height="28" viewBox="0 0 30 28">
<g fill="#fff" stroke="#8d96a5" stroke-width=".9"><rect x=".5" y=".5" width="6.500" height="4.500"/><rect x="7" y=".5" width="6.500" height="4.500"/>
<rect x=".5" y="15.500" width="6.500" height="5"/><rect x="7" y="15.500" width="6.500" height="5"/><rect x=".5" y="20.500" width="6.500" height="5"/><rect x="7" y="20.500" width="6.500" height="5"/></g>
<rect x="4.500" y="7.500" width="11" height="6" fill="none" stroke="#4a4f58" stroke-width=".9" stroke-dasharray="1.500 1"/>
<path d="M15 5 L25 14 M25 5.500 L15.500 14" stroke="#e8452a" stroke-width="1.700" fill="none"/>
</svg>
<div class="t" style="left:903px;top:96px;width:120px;text-align:center;">刪除</div>
<svg class="a" style="left:960.5px;top:117px" width="5" height="3" viewBox="0 0 5 3"><path d="M0 0 h5 l-2.5 3 z" fill="#4d6f9f"/></svg>
<svg class="a" style="left:990px;top:60px" width="32" height="32" viewBox="0 0 32 32">
<path d="M.5 1.500 h29 M.5 0 v3 M29.500 0 v3 M9 0 v3 M21 0 v3" stroke="#3a3f48" stroke-width=".8"/>
<path d="M11 1.500 h8 M11 1.500 l2 -1.300 v2.600 z M19 1.500 l-2 -1.300 v2.600 z" stroke="#3a3f48" stroke-width=".7" fill="#3a3f48"/>
<rect x=".5" y="5.500" width="29" height="22" fill="#fff" stroke="#8d96a5" stroke-width=".9"/>
<rect x="9" y="5.500" width="12" height="22" fill="#e6ecf8"/>
<path d="M.5 12 h29 M.5 22 h29 M9 5.500 v22 M21 5.500 v22" stroke="#aab4c6" stroke-width=".9"/>
<rect x="9.500" y="12.500" width="11" height="9" fill="#6f93e6"/>
<path d="M4 27.500 q0 2 2 2 h6 q2 0 2 -2" fill="#fff" stroke="#8d96a5" stroke-width=".8"/>
</svg>
<div class="t" style="left:945px;top:96px;width:120px;text-align:center;">格式</div>
<svg class="a" style="left:1002.5px;top:117px" width="5" height="3" viewBox="0 0 5 3"><path d="M0 0 h5 l-2.5 3 z" fill="#4d6f9f"/></svg>
<div class="a" style="left:1043px;top:58px;font:bold 15.500px/16px 'Liberation Sans',sans-serif;color:#111">Σ</div>
<div class="t" style="left:1060px;top:60px;">自動加總</div>
<svg class="a" style="left:1113.5px;top:65px" width="5" height="3" viewBox="0 0 5 3"><path d="M0 0 h5 l-2.5 3 z" fill="#4d6f9f"/></svg>
<svg class="a" style="left:1042px;top:81px" width="14" height="15" viewBox="0 0 14 15"><rect x=".5" y=".5" width="12.500" height="13.500" fill="#fff" stroke="#5f7fc8" stroke-width="1"/><rect x="1" y="1" width="11.500" height="2.500" fill="#9fb8ea"/><path d="M5 4.500 h3.500 v4 h2.500 l-4.250 4.500 l-4.250 -4.500 h2.500 z" fill="#2b63d0" stroke="#1b3f9a" stroke-width=".6"/></svg>
<div class="t" style="left:1060px;top:82px;">填滿</div>
<svg class="a" style="left:1088.5px;top:87px" width="5" height="3" viewBox="0 0 5 3"><path d="M0 0 h5 l-2.5 3 z" fill="#4d6f9f"/></svg>
<svg class="a" style="left:1041px;top:104px" width="17" height="13" viewBox="0 0 17 13"><path d="M6 9.500 L12 1.500 L16 4 L10.500 11.500 z" fill="#fdfdfe" stroke="#3a3f48" stroke-width=".9"/><path d="M6 9.500 L10.500 11.500 L8 12.500 L3 10.500 z" fill="#dfe4ee" stroke="#3a3f48" stroke-width=".9"/><path d="M0 12.500 h13" stroke="#3a3f48" stroke-width=".9"/></svg>
<div class="t" style="left:1060px;top:104px;">清除</div>
<svg class="a" style="left:1088.5px;top:109px" width="5" height="3" viewBox="0 0 5 3"><path d="M0 0 h5 l-2.5 3 z" fill="#4d6f9f"/></svg>
<svg class="a" style="left:1127px;top:59px" width="34" height="32" viewBox="0 0 34 32">
<defs><linearGradient id="fn" x1="0" y1="0" x2="1" y2="0"><stop offset="0" stop-color="#7a7c80"/><stop offset=".45" stop-color="#dcdde0"/><stop offset="1" stop-color="#6e7074"/></linearGradient></defs>
<text x="1" y="13" font-family="Liberation Serif,serif" font-size="16" font-weight="bold" fill="#3a5fa8">A</text>
<text x="1.500" y="28.500" font-family="Liberation Serif,serif" font-size="16.500" font-weight="bold" fill="#a83a34">Z</text>
<path d="M10.500 6.500 h19.500 l-7.500 9 v11 l-4 -1 v-10 z" fill="url(#fn)" stroke="#6a6c70" stroke-width=".7"/>
<path d="M10.500 6.500 h19.500" stroke="#55575a" stroke-width="1.200"/>
</svg>
<div class="t" style="left:1082px;top:96px;width:120px;text-align:center;">排序與</div>
<div class="t" style="left:1078px;top:112px;width:120px;text-align:center;">篩選</div>
<svg class="a" style="left:1152.5px;top:117px" width="5" height="3" viewBox="0 0 5 3"><path d="M0 0 h5 l-2.5 3 z" fill="#4d6f9f"/></svg>
<svg class="a" style="left:1169px;top:61px" width="30" height="28" viewBox="0 0 30 28">
<defs><linearGradient id="bn" x1="0" y1="0" x2="1" y2="0"><stop offset="0" stop-color="#6f86b4"/><stop offset=".35" stop-color="#c3d0e8"/><stop offset=".7" stop-color="#7088b8"/><stop offset="1" stop-color="#3a4f80"/></linearGradient></defs>
<rect x="11" y="9" width="7" height="7" fill="#5a70a0"/>
<g>
<rect x="4" y="1" width="7" height="4" rx="1.500" fill="url(#bn)"/><rect x="3" y="4.500" width="9" height="6" rx="1.500" fill="url(#bn)"/><rect x=".5" y="10" width="13" height="14.500" rx="2" fill="url(#bn)"/><rect x=".5" y="21.500" width="13" height="3" rx="1" fill="#3f5485"/>
</g>
<g transform="translate(15 0)">
<rect x="4" y="1" width="7" height="4" rx="1.500" fill="url(#bn)"/><rect x="3" y="4.500" width="9" height="6" rx="1.500" fill="url(#bn)"/><rect x=".5" y="10" width="13" height="14.500" rx="2" fill="url(#bn)"/><rect x=".5" y="21.500" width="13" height="3" rx="1" fill="#3f5485"/>
</g>
</svg>
<div class="t" style="left:1124px;top:96px;width:120px;text-align:center;">尋找與</div>
<div class="t" style="left:1120px;top:112px;width:120px;text-align:center;">選取</div>
<svg class="a" style="left:1194.5px;top:117px" width="5" height="3" viewBox="0 0 5 3"><path d="M0 0 h5 l-2.5 3 z" fill="#4d6f9f"/></svg>
<div class="a" style="left:0;top:150px;width:1280px;height:4px;background:linear-gradient(#a9bbd8,#a3badf)"></div>
<div class="a" style="left:0;top:153px;width:1280px;height:28px;background:#cfdff3"></div>
<div class="a" style="left:0;top:153px;width:227px;height:24px;background:#fff;border:1px solid #6489bb;border-right:none"></div>
<div class="a cell" style="left:3px;top:155px;width:190px;text-align:center;font-size:17px;line-height:23px">E1</div>
<svg class="a" style="left:199px;top:163px" width="8" height="5" viewBox="0 0 8 5"><path d="M0 0 h8 l-4 4.500 z" fill="#111"/></svg>
<div class="a" style="left:213px;top:153px;width:93px;height:24px;background:linear-gradient(#eef3fa 0,#dce7f5 40%,#a9c4e9 100%);border:1px solid #6489bb;border-radius:12px 0 0 12px;border-right:none"></div>
<div class="a" style="left:219px;top:161px;width:8px;height:8px;border-radius:4px;background:radial-gradient(circle at 35% 35%,#f4f4f4,#9a9a9a)"></div>
<div class="a" style="left:286px;top:155px;font:italic bold 16px/18px 'Liberation Serif',serif;color:#5f5f5f;letter-spacing:-.5px">f<span style="font-size:11px">x</span></div>
<div class="a" style="left:306px;top:153px;width:959px;height:24px;background:#fff;border:1px solid #6489bb;border-left:1px solid #9fb7d8"></div>
<div class="a cell" style="left:316px;top:155px;font-size:17px;line-height:25px;transform:scaleX(.91);transform-origin:0 0">COUNTY</div>
<div class="a" style="left:1264px;top:153px;width:15px;height:24px;background:linear-gradient(#f4f7fc,#a9c3e8);border:1px solid #6489bb"></div>
<svg class="a" style="left:1267px;top:159px" width="8" height="11" viewBox="0 0 8 11"><path d="M.8 1 l3.200 3.200 l3.200 -3.200 M.8 5.800 l3.200 3.200 l3.200 -3.200" fill="none" stroke="#111" stroke-width="1.600"/></svg>
<div class="a" style="left:0;top:177px;width:1276px;height:4px;background:linear-gradient(#ffffff 0,#ffffff 25%,#dfeafa 26%,#dfeafa 74%,#6c90c4 75%,#6c90c4 100%);border-left:1px solid #6489bb"></div>
<div class="a" style="left:0;top:181px;width:1260px;height:765px;background:#fff;overflow:hidden">
<div class="a" style="left:0;top:0;width:34px;height:22px;background:#a9c4e9;border-right:1px solid #9eb6ce;border-bottom:1px solid #f29536;box-shadow:inset 1px 1px 0 #bdd3f2,inset -1px 0 0 #bdd3f2"></div>
<svg class="a" style="left:16px;top:5px" width="14" height="14" viewBox="0 0 14 14"><defs><linearGradient id="tri" x1="0" y1="0" x2="1" y2="1"><stop offset="0" stop-color="#eef3fb"/><stop offset="1" stop-color="#c3d4ec"/></linearGradient></defs><path d="M13 0 V13 H0 z" fill="url(#tri)"/></svg>
<div class="a cell" style="left:34px;top:0;width:85px;height:22px;line-height:26px;padding-left:2px;text-align:center;color:#1f3f46;border-bottom:1px solid #9eb6ce;background:linear-gradient(#f9fbfd 0,#eef2f8 40%,#d5deeb 100%);border-right:1px solid #9eb6ce">A</div>
<div class="a cell" style="left:119px;top:0;width:77px;height:22px;line-height:26px;padding-left:2px;text-align:center;color:#1f3f46;border-bottom:1px solid #9eb6ce;background:linear-gradient(#f9fbfd 0,#eef2f8 40%,#d5deeb 100%);border-right:1px solid #9eb6ce">B</div>
<div class="a cell" style="left:196px;top:0;width:206px;height:22px;line-height:26px;padding-left:2px;text-align:center;color:#1f3f46;border-bottom:1px solid #9eb6ce;background:linear-gradient(#f9fbfd 0,#eef2f8 40%,#d5deeb 100%);border-right:1px solid #9eb6ce">C</div>
<div class="a cell" style="left:402px;top:0;width:186px;height:22px;line-height:26px;padding-left:2px;text-align:center;color:#1f3f46;border-bottom:1px solid #9eb6ce;background:linear-gradient(#f9fbfd 0,#eef2f8 40%,#d5deeb 100%);border-right:1px solid #9eb6ce">D</div>
<div class="a cell" style="left:588px;top:0;width:294px;height:22px;line-height:26px;padding-left:2px;text-align:center;color:#1f3f46;border-bottom:1px solid #9eb6ce;background:#9dbfe5;border-right:1px solid #f4f7fb;border-bottom-color:#ffffff;box-shadow:-1px 0 0 #f4f7fb">E</div>
<div class="a cell" style="left:882px;top:0;width:391px;height:22px;line-height:26px;padding-left:2px;text-align:center;color:#1f3f46;border-bottom:1px solid #9eb6ce;background:linear-gradient(#f9fbfd 0,#eef2f8 40%,#d5deeb 100%);border-right:1px solid #9eb6ce">F</div>
<div class="a" style="left:1259px;top:0;width:1px;height:22px;background:#d5deeb"></div>
<div class="a" style="left:588px;top:44px;width:294px;height:730px;background:#e9ecf6"></div>
<div class="a" style="left:118px;top:22px;width:1px;height:750px;background:#d0d7e5"></div>
<div class="a" style="left:195px;top:22px;width:1px;height:750px;background:#d0d7e5"></div>
<div class="a" style="left:401px;top:22px;width:1px;height:750px;background:#d0d7e5"></div>
<div class="a" style="left:587px;top:22px;width:1px;height:750px;background:#d0d7e5"></div>
<div class="a" style="left:881px;top:22px;width:1px;height:750px;background:#d0d7e5"></div>
<div class="a" style="left:1272px;top:22px;width:1px;height:750px;background:#d0d7e5"></div>
<div class="a cell" style="left:0;top:22px;width:34px;height:22px;line-height:25px;text-align:center;background:#ffd58d;color:#1f3f46;border-right:1px solid #f29536;border-bottom:1px solid #f29536;padding-left:1px">1</div>
<div class="a" style="left:34px;top:43px;width:1226px;height:1px;background:#d0d7e5"></div>
<div class="a cell hd" style="left:37px;top:22px;height:21px;line-height:26px;transform:scaleX(.91);transform-origin:0 0">ID</div>
<div class="a cell hd" style="left:122px;top:22px;height:21px;line-height:26px;transform:scaleX(.91);transform-origin:0 0">OBJECTI</div>
<div class="a cell hd" style="left:199px;top:22px;height:21px;line-height:26px;transform:scaleX(.91);transform-origin:0 0">VILLAGE</div>
<div class="a cell hd" style="left:405px;top:22px;height:21px;line-height:26px;transform:scaleX(.91);transform-origin:0 0">TOWN</div>
<div class="a cell hd" style="left:591px;top:22px;height:21px;line-height:26px;transform:scaleX(.91);transform-origin:0 0">COUNTY</div>
<div class="a cell hd" style="left:885px;top:22px;height:21px;line-height:26px;transform:scaleX(.91);transform-origin:0 0">VILLAGE_ID</div>
<div class="a cell" style="left:0;top:44px;width:34px;height:22px;line-height:25px;text-align:center;background:#ffd58d;color:#1f3f46;border-right:1px solid #f29536;border-bottom:1px solid #f29536;padding-left:1px">2</div>
<div class="a" style="left:34px;top:65px;width:1226px;height:1px;background:#d0d7e5"></div>
<div class="a cell" style="left:119px;top:44px;width:73.500px;height:21px;line-height:26px;text-align:right">435</div>
<div class="a cell" style="left:198px;top:44px;height:22px;line-height:28px">人和村</div>
<div class="a cell" style="left:404px;top:44px;height:22px;line-height:28px">三星鄉</div>
<div class="a cell" style="left:591px;top:44px;height:22px;line-height:28px">宜蘭縣</div>
<div class="a cell" style="left:885px;top:44px;height:21px;line-height:26px">005</div>
<svg class="a" style="left:884px;top:44px" width="5" height="5" viewBox="0 0 5 5"><path d="M0 0 h5 l-5 5 z" fill="#1e8a2e"/></svg>
<div class="a cell" style="left:0;top:66px;width:34px;height:22px;line-height:25px;text-align:center;background:#ffd58d;color:#1f3f46;border-right:1px solid #f29536;border-bottom:1px solid #f29536;padding-left:1px">3</div>
<div class="a" style="left:34px;top:87px;width:1226px;height:1px;background:#d0d7e5"></div>
<div class="a cell" style="left:119px;top:66px;width:73.500px;height:21px;line-height:26px;text-align:right">464</div>
<div class="a cell" style="left:198px;top:66px;height:22px;line-height:28px">大洲村</div>
<div class="a cell" style="left:404px;top:66px;height:22px;line-height:28px">三星鄉</div>
<div class="a cell" style="left:591px;top:66px;height:22px;line-height:28px">宜蘭縣</div>
<div class="a cell" style="left:885px;top:66px;height:21px;line-height:26px">017</div>
<svg class="a" style="left:884px;top:66px" width="5" height="5" viewBox="0 0 5 5"><path d="M0 0 h5 l-5 5 z" fill="#1e8a2e"/></svg>
<div class="a cell" style="left:0;top:88px;width:34px;height:22px;line-height:25px;text-align:center;background:#ffd58d;color:#1f3f46;border-right:1px solid #f29536;border-bottom:1px solid #f29536;padding-left:1px">4</div>
<div class="a" style="left:34px;top:109px;width:1226px;height:1px;background:#d0d7e5"></div>
<div class="a cell" style="left:119px;top:88px;width:73.500px;height:21px;line-height:26px;text-align:right">462</div>
<div class="a cell" style="left:198px;top:88px;height:22px;line-height:28px">大義村</div>
<div class="a cell" style="left:404px;top:88px;height:22px;line-height:28px">三星鄉</div>
<div class="a cell" style="left:591px;top:88px;height:22px;line-height:28px">宜蘭縣</div>
<div class="a cell" style="left:885px;top:88px;height:21px;line-height:26px">015</div>
<svg class="a" style="left:884px;top:88px" width="5" height="5" viewBox="0 0 5 5"><path d="M0 0 h5 l-5 5 z" fill="#1e8a2e"/></svg>
<div class="a cell" style="left:0;top:110px;width:34px;height:22px;line-height:25px;text-align:center;background:#ffd58d;color:#1f3f46;border-right:1px solid #f29536;border-bottom:1px solid #f29536;padding-left:1px">5</div>
<div class="a" style="left:34px;top:131px;width:1226px;height:1px;background:#d0d7e5"></div>
<div class="a cell" style="left:119px;top:110px;width:73.500px;height:21px;line-height:26px;text-align:right">440</div>
<div class="a cell" style="left:198px;top:110px;height:22px;line-height:28px">大隱村</div>
<div class="a cell" style="left:404px;top:110px;height:22px;line-height:28px">三星鄉</div>
<div class="a cell" style="left:591px;top:110px;height:22px;line-height:28px">宜蘭縣</div>
<div class="a cell" style="left:885px;top:110px;height:21px;line-height:26px">010</div>
<svg class="a" style="left:884px;top:110px" width="5" height="5" viewBox="0 0 5 5"><path d="M0 0 h5 l-5 5 z" fill="#1e8a2e"/></svg>
<div class="a cell" style="left:0;top:132px;width:34px;height:22px;line-height:25px;text-align:center;background:#ffd58d;color:#1f3f46;border-right:1px solid #f29536;border-bottom:1px solid #f29536;padding-left:1px">6</div>
<div class="a" style="left:34px;top:153px;width:1226px;height:1px;background:#d0d7e5"></div>
<div class="a cell" style="left:119px;top:132px;width:73.500px;height:21px;line-height:26px;text-align:right">432</div>
<div class="a cell" style="left:198px;top:132px;height:22px;line-height:28px">天山村</div>
<div class="a cell" style="left:404px;top:132px;height:22px;line-height:28px">三星鄉</div>
<div class="a cell" style="left:591px;top:132px;height:22px;line-height:28px">宜蘭縣</div>
<div class="a cell" style="left:885px;top:132px;height:21px;line-height:26px">002</div>
<svg class="a" style="left:884px;top:132px" width="5" height="5" viewBox="0 0 5 5"><path d="M0 0 h5 l-5 5 z" fill="#1e8a2e"/></svg>
<div class="a cell" style="left:0;top:154px;width:34px;height:22px;line-height:25px;text-align:center;background:#ffd58d;color:#1f3f46;border-right:1px solid #f29536;border-bottom:1px solid #f29536;padding-left:1px">7</div>
<div class="a" style="left:34px;top:175px;width:1226px;height:1px;background:#d0d7e5"></div>
<div class="a cell" style="left:119px;top:154px;width:73.500px;height:21px;line-height:26px;text-align:right">433</div>
<div class="a cell" style="left:198px;top:154px;height:22px;line-height:28px">天福村</div>
<div class="a cell" style="left:404px;top:154px;height:22px;line-height:28px">三星鄉</div>
<div class="a cell" style="left:591px;top:154px;height:22px;line-height:28px">宜蘭縣</div>
<div class="a cell" style="left:885px;top:154px;height:21px;line-height:26px">003</div>
<svg class="a" style="left:884px;top:154px" width="5" height="5" viewBox="0 0 5 5"><path d="M0 0 h5 l-5 5 z" fill="#1e8a2e"/></svg>
<div class="a cell" style="left:0;top:176px;width:34px;height:22px;line-height:25px;text-align:center;background:#ffd58d;color:#1f3f46;border-right:1px solid #f29536;border-bottom:1px solid #f29536;padding-left:1px">8</div>
<div class="a" style="left:34px;top:197px;width:1226px;height:1px;background:#d0d7e5"></div>
<div class="a cell" style="left:119px;top:176px;width:73.500px;height:21px;line-height:26px;text-align:right">438</div>
<div class="a cell" style="left:198px;top:176px;height:22px;line-height:28px">月眉村</div>
<div class="a cell" style="left:404px;top:176px;height:22px;line-height:28px">三星鄉</div>
<div class="a cell" style="left:591px;top:176px;height:22px;line-height:28px">宜蘭縣</div>
<div class="a cell" style="left:885px;top:176px;height:21px;line-height:26px">008</div>
<svg class="a" style="left:884px;top:176px" width="5" height="5" viewBox="0 0 5 5"><path d="M0 0 h5 l-5 5 z" fill="#1e8a2e"/></svg>
<div class="a cell" style="left:0;top:198px;width:34px;height:22px;line-height:25px;text-align:center;background:#ffd58d;color:#1f3f46;border-right:1px solid #f29536;border-bottom:1px solid #f29536;padding-left:1px">9</div>
<div class="a" style="left:34px;top:219px;width:1226px;height:1px;background:#d0d7e5"></div>
<div class="a cell" style="left:119px;top:198px;width:73.500px;height:21px;line-height:26px;text-align:right">458</div>
<div class="a cell" style="left:198px;top:198px;height:22px;line-height:28px">行健村</div>
<div class="a cell" style="left:404px;top:198px;height:22px;line-height:28px">三星鄉</div>
<div class="a cell" style="left:591px;top:198px;height:22px;line-height:28px">宜蘭縣</div>
<div class="a cell" style="left:885px;top:198px;height:21px;line-height:26px">011</div>
<svg class="a" style="left:884px;top:198px" width="5" height="5" viewBox="0 0 5 5"><path d="M0 0 h5 l-5 5 z" fill="#1e8a2e"/></svg>
<div class="a cell" style="left:0;top:220px;width:34px;height:22px;line-height:25px;text-align:center;background:#ffd58d;color:#1f3f46;border-right:1px solid #f29536;border-bottom:1px solid #f29536;padding-left:1px">10</div>
<div class="a" style="left:34px;top:241px;width:1226px;height:1px;background:#d0d7e5"></div>
<div class="a cell" style="left:119px;top:220px;width:73.500px;height:21px;line-height:26px;text-align:right">7744</div>
<div class="a cell" style="left:198px;top:220px;height:22px;line-height:28px">尾塹村</div>
<div class="a cell" style="left:404px;top:220px;height:22px;line-height:28px">三星鄉</div>
<div class="a cell" style="left:591px;top:220px;height:22px;line-height:28px">宜蘭縣</div>
<div class="a cell" style="left:885px;top:220px;height:21px;line-height:26px">018</div>
<svg class="a" style="left:884px;top:220px" width="5" height="5" viewBox="0 0 5 5"><path d="M0 0 h5 l-5 5 z" fill="#1e8a2e"/></svg>
<div class="a cell" style="left:0;top:242px;width:34px;height:22px;line-height:25px;text-align:center;background:#ffd58d;color:#1f3f46;border-right:1px solid #f29536;border-bottom:1px solid #f29536;padding-left:1px">11</div>
<div class="a" style="left:34px;top:263px;width:1226px;height:1px;background:#d0d7e5"></div>
<div class="a cell" style="left:119px;top:242px;width:73.500px;height:21px;line-height:26px;text-align:right">463</div>
<div class="a cell" style="left:198px;top:242px;height:22px;line-height:28px">尚武村</div>
<div class="a cell" style="left:404px;top:242px;height:22px;line-height:28px">三星鄉</div>
<div class="a cell" style="left:591px;top:242px;height:22px;line-height:28px">宜蘭縣</div>
<div class="a cell" style="left:885px;top:242px;height:21px;line-height:26px">016</div>
<svg class="a" style="left:884px;top:242px" width="5" height="5" viewBox="0 0 5 5"><path d="M0 0 h5 l-5 5 z" fill="#1e8a2e"/></svg>
<div class="a cell" style="left:0;top:264px;width:34px;height:22px;line-height:25px;text-align:center;background:#ffd58d;color:#1f3f46;border-right:1px solid #f29536;border-bottom:1px solid #f29536;padding-left:1px">12</div>
<div class="a" style="left:34px;top:285px;width:1226px;height:1px;background:#d0d7e5"></div>
<div class="a cell" style="left:119px;top:264px;width:73.500px;height:21px;line-height:26px;text-align:right">439</div>
<div class="a cell" style="left:198px;top:264px;height:22px;line-height:28px">拱照村</div>
<div class="a cell" style="left:404px;top:264px;height:22px;line-height:28px">三星鄉</div>
<div class="a cell" style="left:591px;top:264px;height:22px;line-height:28px">宜蘭縣</div>
<div class="a cell" style="left:885px;top:264px;height:21px;line-height:26px">009</div>
<svg class="a" style="left:884px;top:264px" width="5" height="5" viewBox="0 0 5 5"><path d="M0 0 h5 l-5 5 z" fill="#1e8a2e"/></svg>
<div class="a cell" style="left:0;top:286px;width:34px;height:22px;line-height:25px;text-align:center;background:#ffd58d;color:#1f3f46;border-right:1px solid #f29536;border-bottom:1px solid #f29536;padding-left:1px">13</div>
<div class="a" style="left:34px;top:307px;width:1226px;height:1px;background:#d0d7e5"></div>
<div class="a cell" style="left:119px;top:286px;width:73.500px;height:21px;line-height:26px;text-align:right">431</div>
<div class="a cell" style="left:198px;top:286px;height:22px;line-height:28px">員山村</div>
<div class="a cell" style="left:404px;top:286px;height:22px;line-height:28px">三星鄉</div>
<div class="a cell" style="left:591px;top:286px;height:22px;line-height:28px">宜蘭縣</div>
<div class="a cell" style="left:885px;top:286px;height:21px;line-height:26px">001</div>
<svg class="a" style="left:884px;top:286px" width="5" height="5" viewBox="0 0 5 5"><path d="M0 0 h5 l-5 5 z" fill="#1e8a2e"/></svg>
<div class="a cell" style="left:0;top:308px;width:34px;height:22px;line-height:25px;text-align:center;background:#ffd58d;color:#1f3f46;border-right:1px solid #f29536;border-bottom:1px solid #f29536;padding-left:1px">14</div>
<div class="a" style="left:34px;top:329px;width:1226px;height:1px;background:#d0d7e5"></div>
<div class="a cell" style="left:119px;top:308px;width:73.500px;height:21px;line-height:26px;text-align:right">460</div>
<div class="a cell" style="left:198px;top:308px;height:22px;line-height:28px">貴林村</div>
<div class="a cell" style="left:404px;top:308px;height:22px;line-height:28px">三星鄉</div>
<div class="a cell" style="left:591px;top:308px;height:22px;line-height:28px">宜蘭縣</div>
<div class="a cell" style="left:885px;top:308px;height:21px;line-height:26px">013</div>
<svg class="a" style="left:884px;top:308px" width="5" height="5" viewBox="0 0 5 5"><path d="M0 0 h5 l-5 5 z" fill="#1e8a2e"/></svg>
<div class="a cell" style="left:0;top:330px;width:34px;height:22px;line-height:25px;text-align:center;background:#ffd58d;color:#1f3f46;border-right:1px solid #f29536;border-bottom:1px solid #f29536;padding-left:1px">15</div>
<div class="a" style="left:34px;top:351px;width:1226px;height:1px;background:#d0d7e5"></div>
<div class="a cell" style="left:119px;top:330px;width:73.500px;height:21px;line-height:26px;text-align:right">437</div>
<div class="a cell" style="left:198px;top:330px;height:22px;line-height:28px">集慶村</div>
<div class="a cell" style="left:404px;top:330px;height:22px;line-height:28px">三星鄉</div>
<div class="a cell" style="left:591px;top:330px;height:22px;line-height:28px">宜蘭縣</div>
<div class="a cell" style="left:885px;top:330px;height:21px;line-height:26px">007</div>
<svg class="a" style="left:884px;top:330px" width="5" height="5" viewBox="0 0 5 5"><path d="M0 0 h5 l-5 5 z" fill="#1e8a2e"/></svg>
<div class="a cell" style="left:0;top:352px;width:34px;height:22px;line-height:25px;text-align:center;background:#ffd58d;color:#1f3f46;border-right:1px solid #f29536;border-bottom:1px solid #f29536;padding-left:1px">16</div>
<div class="a" style="left:34px;top:373px;width:1226px;height:1px;background:#d0d7e5"></div>
<div class="a cell" style="left:119px;top:352px;width:73.500px;height:21px;line-height:26px;text-align:right">436</div>
<div class="a cell" style="left:198px;top:352px;height:22px;line-height:28px">義德村</div>
<div class="a cell" style="left:404px;top:352px;height:22px;line-height:28px">三星鄉</div>
<div class="a cell" style="left:591px;top:352px;height:22px;line-height:28px">宜蘭縣</div>
<div class="a cell" style="left:885px;top:352px;height:21px;line-height:26px">006</div>
<svg class="a" style="left:884px;top:352px" width="5" height="5" viewBox="0 0 5 5"><path d="M0 0 h5 l-5 5 z" fill="#1e8a2e"/></svg>
<div class="a cell" style="left:0;top:374px;width:34px;height:22px;line-height:25px;text-align:center;background:#ffd58d;color:#1f3f46;border-right:1px solid #f29536;border-bottom:1px solid #f29536;padding-left:1px">17</div>
<div class="a" style="left:34px;top:395px;width:1226px;height:1px;background:#d0d7e5"></div>
<div class="a cell" style="left:119px;top:374px;width:73.500px;height:21px;line-height:26px;text-align:right">461</div>
<div class="a cell" style="left:198px;top:374px;height:22px;line-height:28px">萬富村</div>
<div class="a cell" style="left:404px;top:374px;height:22px;line-height:28px">三星鄉</div>
<div class="a cell" style="left:591px;top:374px;height:22px;line-height:28px">宜蘭縣</div>
<div class="a cell" style="left:885px;top:374px;height:21px;line-height:26px">014</div>
<svg class="a" style="left:884px;top:374px" width="5" height="5" viewBox="0 0 5 5"><path d="M0 0 h5 l-5 5 z" fill="#1e8a2e"/></svg>
<div class="a cell" style="left:0;top:396px;width:34px;height:22px;line-height:25px;text-align:center;background:#ffd58d;color:#1f3f46;border-right:1px solid #f29536;border-bottom:1px solid #f29536;padding-left:1px">18</div>
<div class="a" style="left:34px;top:417px;width:1226px;height:1px;background:#d0d7e5"></div>
<div class="a cell" style="left:119px;top:396px;width:73.500px;height:21px;line-height:26px;text-align:right">459</div>
<div class="a cell" style="left:198px;top:396px;height:22px;line-height:28px">萬德村</div>
<div class="a cell" style="left:404px;top:396px;height:22px;line-height:28px">三星鄉</div>
<div class="a cell" style="left:591px;top:396px;height:22px;line-height:28px">宜蘭縣</div>
<div class="a cell" style="left:885px;top:396px;height:21px;line-height:26px">012</div>
<svg class="a" style="left:884px;top:396px" width="5" height="5" viewBox="0 0 5 5"><path d="M0 0 h5 l-5 5 z" fill="#1e8a2e"/></svg>
<div class="a cell" style="left:0;top:418px;width:34px;height:22px;line-height:25px;text-align:center;background:#ffd58d;color:#1f3f46;border-right:1px solid #f29536;border-bottom:1px solid #f29536;padding-left:1px">19</div>
<div class="a" style="left:34px;top:439px;width:1226px;height:1px;background:#d0d7e5"></div>
<div class="a cell" style="left:119px;top:418px;width:73.500px;height:21px;line-height:26px;text-align:right">434</div>
<div class="a cell" style="left:198px;top:418px;height:22px;line-height:28px">雙賢村</div>
<div class="a cell" style="left:404px;top:418px;height:22px;line-height:28px">三星鄉</div>
<div class="a cell" style="left:591px;top:418px;height:22px;line-height:28px">宜蘭縣</div>
<div class="a cell" style="left:885px;top:418px;height:21px;line-height:26px">004</div>
<svg class="a" style="left:884px;top:418px" width="5" height="5" viewBox="0 0 5 5"><path d="M0 0 h5 l-5 5 z" fill="#1e8a2e"/></svg>
<div class="a cell" style="left:0;top:440px;width:34px;height:22px;line-height:25px;text-align:center;background:#ffd58d;color:#1f3f46;border-right:1px solid #f29536;border-bottom:1px solid #f29536;padding-left:1px">20</div>
<div class="a" style="left:34px;top:461px;width:1226px;height:1px;background:#d0d7e5"></div>
<div class="a cell" style="left:119px;top:440px;width:73.500px;height:21px;line-height:26px;text-align:right">4175</div>
<div class="a cell" style="left:198px;top:440px;height:22px;line-height:28px">太平村</div>
<div class="a cell" style="left:404px;top:440px;height:22px;line-height:28px">大同鄉</div>
<div class="a cell" style="left:591px;top:440px;height:22px;line-height:28px">宜蘭縣</div>
<div class="a cell" style="left:885px;top:440px;height:21px;line-height:26px">007</div>
<svg class="a" style="left:884px;top:440px" width="5" height="5" viewBox="0 0 5 5"><path d="M0 0 h5 l-5 5 z" fill="#1e8a2e"/></svg>
<div class="a cell" style="left:0;top:462px;width:34px;height:22px;line-height:25px;text-align:center;background:#ffd58d;color:#1f3f46;border-right:1px solid #f29536;border-bottom:1px solid #f29536;padding-left:1px">21</div>
<div class="a" style="left:34px;top:483px;width:1226px;height:1px;background:#d0d7e5"></div>
<div class="a cell" style="left:119px;top:462px;width:73.500px;height:21px;line-height:26px;text-align:right">470</div>
<div class="a cell" style="left:198px;top:462px;height:22px;line-height:28px">四季村</div>
<div class="a cell" style="left:404px;top:462px;height:22px;line-height:28px">大同鄉</div>
<div class="a cell" style="left:591px;top:462px;height:22px;line-height:28px">宜蘭縣</div>
<div class="a cell" style="left:885px;top:462px;height:21px;line-height:26px">008</div>
<svg class="a" style="left:884px;top:462px" width="5" height="5" viewBox="0 0 5 5"><path d="M0 0 h5 l-5 5 z" fill="#1e8a2e"/></svg>
<div class="a cell" style="left:0;top:484px;width:34px;height:22px;line-height:25px;text-align:center;background:#ffd58d;color:#1f3f46;border-right:1px solid #f29536;border-bottom:1px solid #f29536;padding-left:1px">22</div>
<div class="a" style="left:34px;top:505px;width:1226px;height:1px;background:#d0d7e5"></div>
<div class="a cell" style="left:119px;top:484px;width:73.500px;height:21px;line-height:26px;text-align:right">467</div>
<div class="a cell" style="left:198px;top:484px;height:22px;line-height:28px">松羅村</div>
<div class="a cell" style="left:404px;top:484px;height:22px;line-height:28px">大同鄉</div>
<div class="a cell" style="left:591px;top:484px;height:22px;line-height:28px">宜蘭縣</div>
<div class="a cell" style="left:885px;top:484px;height:21px;line-height:26px">003</div>
<svg class="a" style="left:884px;top:484px" width="5" height="5" viewBox="0 0 5 5"><path d="M0 0 h5 l-5 5 z" fill="#1e8a2e"/></svg>
<div class="a cell" style="left:0;top:506px;width:34px;height:22px;line-height:25px;text-align:center;background:#ffd58d;color:#1f3f46;border-right:1px solid #f29536;border-bottom:1px solid #f29536;padding-left:1px">23</div>
<div class="a" style="left:34px;top:527px;width:1226px;height:1px;background:#d0d7e5"></div>
<div class="a cell" style="left:119px;top:506px;width:73.500px;height:21px;line-height:26px;text-align:right">471</div>
<div class="a cell" style="left:198px;top:506px;height:22px;line-height:28px">南山村</div>
<div class="a cell" style="left:404px;top:506px;height:22px;line-height:28px">大同鄉</div>
<div class="a cell" style="left:591px;top:506px;height:22px;line-height:28px">宜蘭縣</div>
<div class="a cell" style="left:885px;top:506px;height:21px;line-height:26px">009</div>
<svg class="a" style="left:884px;top:506px" width="5" height="5" viewBox="0 0 5 5"><path d="M0 0 h5 l-5 5 z" fill="#1e8a2e"/></svg>
<div class="a cell" style="left:0;top:528px;width:34px;height:22px;line-height:25px;text-align:center;background:#ffd58d;color:#1f3f46;border-right:1px solid #f29536;border-bottom:1px solid #f29536;padding-left:1px">24</div>
<div class="a" style="left:34px;top:549px;width:1226px;height:1px;background:#d0d7e5"></div>
<div class="a cell" style="left:119px;top:528px;width:73.500px;height:21px;line-height:26px;text-align:right">3176</div>
<div class="a cell" style="left:198px;top:528px;height:22px;line-height:28px">英士村</div>
<div class="a cell" style="left:404px;top:528px;height:22px;line-height:28px">大同鄉</div>
<div class="a cell" style="left:591px;top:528px;height:22px;line-height:28px">宜蘭縣</div>
<div class="a cell" style="left:885px;top:528px;height:21px;line-height:26px">005</div>
<svg class="a" style="left:884px;top:528px" width="5" height="5" viewBox="0 0 5 5"><path d="M0 0 h5 l-5 5 z" fill="#1e8a2e"/></svg>
<div class="a cell" style="left:0;top:550px;width:34px;height:22px;line-height:25px;text-align:center;background:#ffd58d;color:#1f3f46;border-right:1px solid #f29536;border-bottom:1px solid #f29536;padding-left:1px">25</div>
<div class="a" style="left:34px;top:571px;width:1226px;height:1px;background:#d0d7e5"></div>
<div class="a cell" style="left:119px;top:550px;width:73.500px;height:21px;line-height:26px;text-align:right">472</div>
<div class="a cell" style="left:198px;top:550px;height:22px;line-height:28px">茂安村</div>
<div class="a cell" style="left:404px;top:550px;height:22px;line-height:28px">大同鄉</div>
<div class="a cell" style="left:591px;top:550px;height:22px;line-height:28px">宜蘭縣</div>
<div class="a cell" style="left:885px;top:550px;height:21px;line-height:26px">010</div>
<svg class="a" style="left:884px;top:550px" width="5" height="5" viewBox="0 0 5 5"><path d="M0 0 h5 l-5 5 z" fill="#1e8a2e"/></svg>
<div class="a cell" style="left:0;top:572px;width:34px;height:22px;line-height:25px;text-align:center;background:#ffd58d;color:#1f3f46;border-right:1px solid #f29536;border-bottom:1px solid #f29536;padding-left:1px">26</div>
<div class="a" style="left:34px;top:593px;width:1226px;height:1px;background:#d0d7e5"></div>
<div class="a cell" style="left:119px;top:572px;width:73.500px;height:21px;line-height:26px;text-align:right">466</div>
<div class="a cell" style="left:198px;top:572px;height:22px;line-height:28px">崙埤村</div>
<div class="a cell" style="left:404px;top:572px;height:22px;line-height:28px">大同鄉</div>
<div class="a cell" style="left:591px;top:572px;height:22px;line-height:28px">宜蘭縣</div>
<div class="a cell" style="left:885px;top:572px;height:21px;line-height:26px">002</div>
<svg class="a" style="left:884px;top:572px" width="5" height="5" viewBox="0 0 5 5"><path d="M0 0 h5 l-5 5 z" fill="#1e8a2e"/></svg>
<div class="a cell" style="left:0;top:594px;width:34px;height:22px;line-height:25px;text-align:center;background:#ffd58d;color:#1f3f46;border-right:1px solid #f29536;border-bottom:1px solid #f29536;padding-left:1px">27</div>
<div class="a" style="left:34px;top:615px;width:1226px;height:1px;background:#d0d7e5"></div>
<div class="a cell" style="left:119px;top:594px;width:73.500px;height:21px;line-height:26px;text-align:right">465</div>
<div class="a cell" style="left:198px;top:594px;height:22px;line-height:28px">寒溪村</div>
<div class="a cell" style="left:404px;top:594px;height:22px;line-height:28px">大同鄉</div>
<div class="a cell" style="left:591px;top:594px;height:22px;line-height:28px">宜蘭縣</div>
<div class="a cell" style="left:885px;top:594px;height:21px;line-height:26px">001</div>
<svg class="a" style="left:884px;top:594px" width="5" height="5" viewBox="0 0 5 5"><path d="M0 0 h5 l-5 5 z" fill="#1e8a2e"/></svg>
<div class="a cell" style="left:0;top:616px;width:34px;height:22px;line-height:25px;text-align:center;background:#ffd58d;color:#1f3f46;border-right:1px solid #f29536;border-bottom:1px solid #f29536;padding-left:1px">28</div>
<div class="a" style="left:34px;top:637px;width:1226px;height:1px;background:#d0d7e5"></div>
<div class="a cell" style="left:119px;top:616px;width:73.500px;height:21px;line-height:26px;text-align:right">468</div>
<div class="a cell" style="left:198px;top:616px;height:22px;line-height:28px">復興村</div>
<div class="a cell" style="left:404px;top:616px;height:22px;line-height:28px">大同鄉</div>
<div class="a cell" style="left:591px;top:616px;height:22px;line-height:28px">宜蘭縣</div>
<div class="a cell" style="left:885px;top:616px;height:21px;line-height:26px">004</div>
<svg class="a" style="left:884px;top:616px" width="5" height="5" viewBox="0 0 5 5"><path d="M0 0 h5 l-5 5 z" fill="#1e8a2e"/></svg>
<div class="a cell" style="left:0;top:638px;width:34px;height:22px;line-height:25px;text-align:center;background:#ffd58d;color:#1f3f46;border-right:1px solid #f29536;border-bottom:1px solid #f29536;padding-left:1px">29</div>
<div class="a" style="left:34px;top:659px;width:1226px;height:1px;background:#d0d7e5"></div>
<div class="a cell" style="left:119px;top:638px;width:73.500px;height:21px;line-height:26px;text-align:right">469</div>
<div class="a cell" style="left:198px;top:638px;height:22px;line-height:28px">樂水村</div>
<div class="a cell" style="left:404px;top:638px;height:22px;line-height:28px">大同鄉</div>
<div class="a cell" style="left:591px;top:638px;height:22px;line-height:28px">宜蘭縣</div>
<div class="a cell" style="left:885px;top:638px;height:21px;line-height:26px">006</div>
<svg class="a" style="left:884px;top:638px" width="5" height="5" viewBox="0 0 5 5"><path d="M0 0 h5 l-5 5 z" fill="#1e8a2e"/></svg>
<div class="a cell" style="left:0;top:660px;width:34px;height:22px;line-height:25px;text-align:center;background:#ffd58d;color:#1f3f46;border-right:1px solid #f29536;border-bottom:1px solid #f29536;padding-left:1px">30</div>
<div class="a" style="left:34px;top:681px;width:1226px;height:1px;background:#d0d7e5"></div>
<div class="a cell" style="left:119px;top:660px;width:73.500px;height:21px;line-height:26px;text-align:right">504</div>
<div class="a cell" style="left:198px;top:660px;height:22px;line-height:28px">二結村</div>
<div class="a cell" style="left:404px;top:660px;height:22px;line-height:28px">五結鄉</div>
<div class="a cell" style="left:591px;top:660px;height:22px;line-height:28px">宜蘭縣</div>
<div class="a cell" style="left:885px;top:660px;height:21px;line-height:26px">002</div>
<svg class="a" style="left:884px;top:660px" width="5" height="5" viewBox="0 0 5 5"><path d="M0 0 h5 l-5 5 z" fill="#1e8a2e"/></svg>
<div class="a cell" style="left:0;top:682px;width:34px;height:22px;line-height:25px;text-align:center;background:#ffd58d;color:#1f3f46;border-right:1px solid #f29536;border-bottom:1px solid #f29536;padding-left:1px">31</div>
<div class="a" style="left:34px;top:703px;width:1226px;height:1px;background:#d0d7e5"></div>
<div class="a cell" style="left:119px;top:682px;width:73.500px;height:21px;line-height:26px;text-align:right">503</div>
<div class="a cell" style="left:198px;top:682px;height:22px;line-height:28px">三興村</div>
<div class="a cell" style="left:404px;top:682px;height:22px;line-height:28px">五結鄉</div>
<div class="a cell" style="left:591px;top:682px;height:22px;line-height:28px">宜蘭縣</div>
<div class="a cell" style="left:885px;top:682px;height:21px;line-height:26px">001</div>
<svg class="a" style="left:884px;top:682px" width="5" height="5" viewBox="0 0 5 5"><path d="M0 0 h5 l-5 5 z" fill="#1e8a2e"/></svg>
<div class="a cell" style="left:0;top:704px;width:34px;height:22px;line-height:25px;text-align:center;background:#ffd58d;color:#1f3f46;border-right:1px solid #f29536;border-bottom:1px solid #f29536;padding-left:1px">32</div>
<div class="a" style="left:34px;top:725px;width:1226px;height:1px;background:#d0d7e5"></div>
<div class="a cell" style="left:119px;top:704px;width:73.500px;height:21px;line-height:26px;text-align:right">506</div>
<div class="a cell" style="left:198px;top:704px;height:22px;line-height:28px">上四村</div>
<div class="a cell" style="left:404px;top:704px;height:22px;line-height:28px">五結鄉</div>
<div class="a cell" style="left:591px;top:704px;height:22px;line-height:28px">宜蘭縣</div>
<div class="a cell" style="left:885px;top:704px;height:21px;line-height:26px">004</div>
<svg class="a" style="left:884px;top:704px" width="5" height="5" viewBox="0 0 5 5"><path d="M0 0 h5 l-5 5 z" fill="#1e8a2e"/></svg>
<div class="a cell" style="left:0;top:726px;width:34px;height:22px;line-height:25px;text-align:center;background:#ffd58d;color:#1f3f46;border-right:1px solid #f29536;border-bottom:1px solid #f29536;padding-left:1px">33</div>
<div class="a" style="left:34px;top:747px;width:1226px;height:1px;background:#d0d7e5"></div>
<div class="a cell" style="left:119px;top:726px;width:73.500px;height:21px;line-height:26px;text-align:right">424</div>
<div class="a cell" style="left:198px;top:726px;height:22px;line-height:28px">大吉村</div>
<div class="a cell" style="left:404px;top:726px;height:22px;line-height:28px">五結鄉</div>
<div class="a cell" style="left:591px;top:726px;height:22px;line-height:28px">宜蘭縣</div>
<div class="a cell" style="left:885px;top:726px;height:21px;line-height:26px">009</div>
<svg class="a" style="left:884px;top:726px" width="5" height="5" viewBox="0 0 5 5"><path d="M0 0 h5 l-5 5 z" fill="#1e8a2e"/></svg>
<div class="a cell" style="left:0;top:748px;width:34px;height:22px;line-height:25px;text-align:center;background:#ffd58d;color:#1f3f46;border-right:1px solid #f29536;border-bottom:1px solid #f29536;padding-left:1px">34</div>
<div class="a" style="left:34px;top:769px;width:1226px;height:1px;background:#d0d7e5"></div>
<div class="a cell" style="left:119px;top:748px;width:73.500px;height:21px;line-height:26px;text-align:right">507</div>
<div class="a cell" style="left:198px;top:748px;height:22px;line-height:28px">中興村</div>
<div class="a cell" style="left:404px;top:748px;height:22px;line-height:28px">五結鄉</div>
<div class="a cell" style="left:591px;top:748px;height:22px;line-height:28px">宜蘭縣</div>
<div class="a cell" style="left:885px;top:748px;height:21px;line-height:26px">005</div>
<svg class="a" style="left:884px;top:748px" width="5" height="5" viewBox="0 0 5 5"><path d="M0 0 h5 l-5 5 z" fill="#1e8a2e"/></svg>
<div class="a" style="left:101px;top:25px;width:16px;height:17px;border:1px solid #8aa2c6;border-radius:3px;background:linear-gradient(#f6f7f9 0,#e9ebee 45%,#dadcdc 55%,#e2e3e2 100%)"></div>
<svg class="a" style="left:106px;top:32px" width="7" height="4" viewBox="0 0 7 4"><path d="M0 0 h7 l-3.500 4 z" fill="#2b3f9a"/></svg>
<div class="a" style="left:178px;top:25px;width:16px;height:17px;border:1px solid #8aa2c6;border-radius:3px;background:linear-gradient(#f6f7f9 0,#e9ebee 45%,#dadcdc 55%,#e2e3e2 100%)"></div>
<svg class="a" style="left:183px;top:32px" width="7" height="4" viewBox="0 0 7 4"><path d="M0 0 h7 l-3.500 4 z" fill="#2b3f9a"/></svg>
<div class="a" style="left:384px;top:25px;width:16px;height:17px;border:1px solid #8aa2c6;border-radius:3px;background:linear-gradient(#f6f7f9 0,#e9ebee 45%,#dadcdc 55%,#e2e3e2 100%)"></div>
<svg class="a" style="left:389px;top:32px" width="7" height="4" viewBox="0 0 7 4"><path d="M0 0 h7 l-3.500 4 z" fill="#2b3f9a"/></svg>
<div class="a" style="left:570px;top:25px;width:16px;height:17px;border:1px solid #8aa2c6;border-radius:3px;background:linear-gradient(#f6f7f9 0,#e9ebee 45%,#dadcdc 55%,#e2e3e2 100%)"></div>
<svg class="a" style="left:575px;top:32px" width="7" height="4" viewBox="0 0 7 4"><path d="M0 0 h7 l-3.500 4 z" fill="#2b3f9a"/></svg>
<div class="a" style="left:865px;top:25px;width:16px;height:17px;border:1px solid #8aa2c6;border-radius:3px;background:linear-gradient(#f6f7f9 0,#e9ebee 45%,#dadcdc 55%,#e2e3e2 100%)"></div>
<svg class="a" style="left:868px;top:29px" width="12" height="10" viewBox="0 0 12 10"><path d="M0 5.500 h5 l-2.500 3 z" fill="#2b3f9a"/><path d="M8.500 9 V1.500 M7 3 l1.500 -1.800 l1.500 1.800" fill="none" stroke="#2b3f9a" stroke-width="1"/></svg>
<div class="a" style="left:1255px;top:25px;width:16px;height:17px;border:1px solid #8aa2c6;border-radius:3px;background:linear-gradient(#f6f7f9 0,#e9ebee 45%,#dadcdc 55%,#e2e3e2 100%)"></div>
<svg class="a" style="left:1260px;top:32px" width="7" height="4" viewBox="0 0 7 4"><path d="M0 0 h7 l-3.500 4 z" fill="#2b3f9a"/></svg>
<div class="a" style="left:586px;top:22px;width:3px;height:745px;background:#000"></div>
<div class="a" style="left:881px;top:22px;width:3px;height:745px;background:#000"></div>
<div class="a" style="left:586px;top:22px;width:298px;height:1px;background:#000"></div>
<div class="a" style="left:880px;top:22px;width:5px;height:6px;background:#000;border-bottom:1px solid #fff"></div>
</div>
<div class="a" style="left:1260px;top:181px;width:16px;height:765px;background:linear-gradient(90deg,#86a6d1 0,#7a9bc8 30%,#7c9ccb 70%,#89a9d6 100%)"></div>
<div class="a" style="left:1261px;top:182px;width:14px;height:7px;background:#fff;border:1px solid #9fb7d8"></div><div class="a" style="left:1264px;top:184px;width:8px;height:1px;background:#6e8cc0"></div>
<svg class="a" style="left:1263px;top:195px" width="11" height="6" viewBox="0 0 11 6"><path d="M0 5.500 h11 l-5.500 -5.500 z" fill="#4a5578"/></svg>
<div class="a" style="left:1261px;top:206px;width:15px;height:8px;border:1px solid #7a8fb8;border-radius:2px;background:linear-gradient(90deg,#f4f6fa,#c4cfe2 70%,#dfe6f2)"></div>
<svg class="a" style="left:1263px;top:935px" width="11" height="6" viewBox="0 0 11 6"><path d="M0 0 h11 l-5.500 5.500 z" fill="#4a5578"/></svg>
<div class="a" style="left:1276px;top:151px;width:4px;height:833px;background:#b3cdf0"></div>
<div class="a" style="left:0;top:946px;width:1280px;height:16px;background:linear-gradient(#8eacd9 0,#9cb8e1 40%,#a6c0e6 100%)"></div>
<div class="a" style="left:0;top:946px;width:63px;height:16px;background:linear-gradient(#d9e6f9 0,#c9dbf4 40%,#b3cbee 60%,#d6e4f8 100%);border-top:1px solid #7f9fcf;border-right:1px solid #7f9fcf"></div>
<svg class="a" style="left:0;top:946px" width="66" height="16" viewBox="0 0 66 16">
<g fill="#1f3f8f">
<rect x="6" y="4" width="1.600" height="8"/><path d="M12.500 4 v8 l-4.800 -4 z"/>
<path d="M26.500 4 v8 l-4.800 -4 z"/>
<path d="M36 4 v8 l4.800 -4 z"/>
<path d="M50 4 v8 l4.800 -4 z"/><rect x="54.900" y="4" width="1.600" height="8"/>
</g></svg>
<svg class="a" style="left:60px;top:946px" width="380" height="16" viewBox="0 0 380 16">
<defs><linearGradient id="stb" x1="0" y1="0" x2="0" y2="1"><stop offset="0" stop-color="#fff"/><stop offset=".6" stop-color="#fff"/><stop offset="1" stop-color="#d3e2f6"/></linearGradient>
<linearGradient id="ntb" x1="0" y1="0" x2="0" y2="1"><stop offset="0" stop-color="#a9c4ea"/><stop offset=".5" stop-color="#bdd2f0"/><stop offset="1" stop-color="#e4eefb"/></linearGradient></defs>
<path d="M3.500 0 V11 Q3.500 14.500 8 14.500 H324 L337.500 0 Z" fill="url(#stb)"/>
<path d="M3.500 0 V11 Q3.500 14.500 8 14.500 H324 L337.500 0" fill="none" stroke="#7f9fcf" stroke-width="1"/>
<path d="M328 14.500 L338.500 1.500 Q339.500 .5 341 .5 H369 L357 14.500 Z" fill="url(#ntb)" stroke="#8aa8d8" stroke-width="1"/>
<path d="M331.500 14 H356" stroke="#fff" stroke-width="1"/>
</svg>
<div class="a" style="left:72px;top:945px;font-family:'Liberation Serif','Noto Serif CJK SC',serif;font-size:14px;line-height:18px;color:#2f53a0;white-space:nowrap;letter-spacing:-.12px">102_05_21台澎金馬修正村里屬性資料_TWD97_121</div>
<svg class="a" style="left:399px;top:948px" width="16" height="13" viewBox="0 0 16 13">
<rect x="3.500" y="3.500" width="10" height="7.500" rx="1.500" fill="#eef3fb" stroke="#7d8fb5"/>
<path d="M3.300 0 v6.600 M0 3.300 h6.600 M1 1 l4.600 4.600 M5.600 1 l-4.600 4.600" stroke="#e89a1a" stroke-width="1.200"/><circle cx="3.300" cy="3.300" r="1" fill="#fff6c8"/>
</svg>
<div class="a" style="left:757px;top:947px;width:6px;height:14px;background:#f4f7fc;border:1px solid #7f99c4;border-radius:1px"></div><div class="a" style="left:759px;top:950px;width:1px;height:8px;background:#5d78aa"></div>
<div class="a" style="left:764px;top:946px;width:496px;height:16px;background:linear-gradient(#7697c8,#7f9fcf 50%,#86a5d3)"></div>
<svg class="a" style="left:770px;top:949px" width="6" height="10" viewBox="0 0 6 10"><path d="M5.500 0 v10 l-5.500 -5 z" fill="#3b4a75"/></svg>
<div class="a" style="left:781px;top:947px;width:161px;height:14px;border:1px solid #7f93b8;border-radius:2px;background:linear-gradient(#f2f5fa 0,#dfe6f2 45%,#c7d2e6 55%,#d6dfee 100%)"></div>
<div class="a" style="left:858px;top:950px;width:7px;height:7px;background:repeating-linear-gradient(90deg,#7d8fb2 0,#7d8fb2 1px,transparent 1px,transparent 2px)"></div>
<svg class="a" style="left:1241px;top:949px" width="6" height="10" viewBox="0 0 6 10"><path d="M.5 0 v10 l5.500 -5 z" fill="#3b4a75"/></svg>
<div class="a" style="left:1252px;top:947px;width:6px;height:14px;background:#f4f7fc;border:1px solid #7f99c4;border-radius:1px"></div><div class="a" style="left:1254px;top:950px;width:1px;height:8px;background:#5d78aa"></div>
<div class="a" style="left:1260px;top:946px;width:16px;height:16px;background:#a3bde4"></div>
<div class="a" style="left:0;top:961px;width:1280px;height:23px;background:linear-gradient(#7094c9 0,#7094c9 2px,#f2f7fd 2px,#f2f7fd 3px,#d7e6fa 3px,#d0e1f8 9px,#b4cef0 11px,#abc8ee 16px,#c0d7f4 100%)"></div>
<div class="t" style="left:7px;top:966px;font-size:12px">就緒</div>
<div class="a" style="left:39px;top:964px;width:1px;height:18px;background:#8fb0dc"></div><div class="a" style="left:40px;top:964px;width:1px;height:18px;background:#e4eefb"></div>
<div class="t" style="left:938px;top:966px;font-size:12px">項目個數: 7808</div>
<div class="a" style="left:1028px;top:964px;width:1px;height:18px;background:#8fb0dc"></div><div class="a" style="left:1029px;top:964px;width:1px;height:18px;background:#e4eefb"></div>
<svg class="a" style="left:1034px;top:963px" width="60" height="20" viewBox="0 0 60 20">
<rect x="1.500" y="1.500" width="56" height="17" rx="2" fill="#c9dbf3" stroke="#a3bde3"/>
<rect x="1.500" y="1.500" width="18.500" height="17" rx="2" fill="#fbd27c" stroke="#d9b066"/>
<path d="M38.500 2 v16" stroke="#a3bde3"/>
<rect x="5.500" y="4.500" width="12" height="10" fill="#fff" stroke="#555"/><path d="M5.500 8 h12 M5.500 11.200 h12 M9.500 4.500 v10 M13.500 4.500 v10" stroke="#555" stroke-width=".9"/>
<rect x="23.500" y="4.500" width="12" height="11" fill="#9a9da3" stroke="#4f535a"/><rect x="26.500" y="6.500" width="6" height="7.500" fill="#f4f6fa" stroke="#5a5f6a" stroke-width=".7"/><path d="M28 9 h3 M28 11 h3" stroke="#8a8f98" stroke-width=".7"/>
<rect x="41.500" y="4.500" width="13" height="11" fill="#a3a6ac" stroke="#4f535a"/><rect x="43" y="5" width="4.500" height="6" fill="#fff"/><rect x="49" y="5" width="4.500" height="6" fill="#fff"/>
</svg>
<div class="t" style="left:1100px;top:966px;font-size:12px">100%</div>
<svg class="a" style="left:1138px;top:963px" width="140" height="20" viewBox="0 0 140 20">
<defs><radialGradient id="zb" cx="50%" cy="30%" r="70%"><stop offset="0" stop-color="#ffffff"/><stop offset="1" stop-color="#bcc8db"/></radialGradient></defs>
<path d="M19 10.500 H121" stroke="#7f96bd" stroke-width="1"/><path d="M19 11.500 H121" stroke="#eef4fc" stroke-width="1"/>
<circle cx="11" cy="10" r="7.300" fill="url(#zb)" stroke="#6f7f9a"/><rect x="7.500" y="9.200" width="7" height="1.800" fill="#3b4658"/>
<circle cx="129" cy="10" r="7.300" fill="url(#zb)" stroke="#6f7f9a"/><rect x="125.500" y="9.100" width="7" height="1.800" fill="#3b4658"/><rect x="128.100" y="6.500" width="1.800" height="7" fill="#3b4658"/>
<path d="M65.500 3.500 h7 v8 l-3.500 4 l-3.500 -4 z" fill="#e8edf6" stroke="#5f6f8c"/><path d="M69 6 v5" stroke="#9aa8c0" stroke-width="1"/>
</svg>
</body></html>
